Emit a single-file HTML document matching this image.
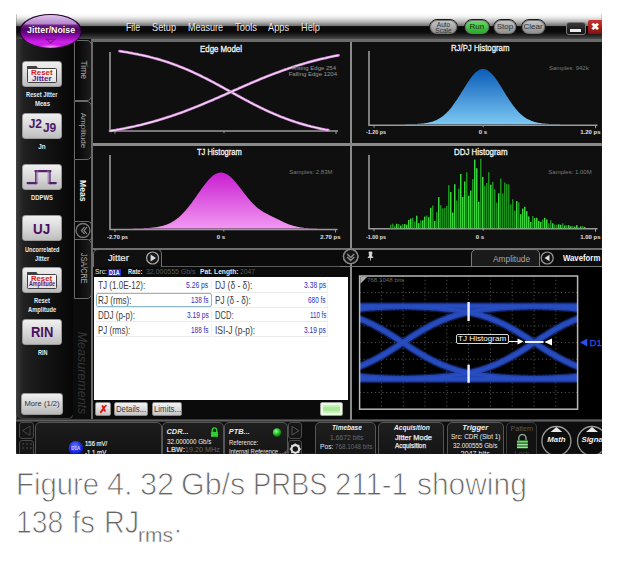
<!DOCTYPE html><html><head><meta charset="utf-8"><style>
html,body{margin:0;padding:0;width:628px;height:565px;overflow:hidden;background:#fff;}
body{position:relative;font-family:"Liberation Sans",sans-serif;}
.a{position:absolute;box-sizing:border-box;}
.t{position:absolute;white-space:nowrap;transform-origin:0 50%;}
#scr{position:absolute;left:0;top:0;width:628px;height:565px;clip-path:inset(14px 26.2px 111.2px 16.3px);}
svg{position:absolute;left:0;top:0;}
</style></head><body><div id="scr">
<div class="a" style="left:16px;top:14px;width:586px;height:440px;background:#0d0d0d;"></div>
<div class="a" style="left:16px;top:14px;width:586px;height:27px;background:linear-gradient(#fdfdfd 0px,#f0f0f0 3px,#b4b4b4 8px,#747474 11.6px,#0a0a0a 12.6px,#0a0a0a 18px,#2a2a2a 22px,#4a4a4a 25px,#5c5c5c 26px,#0e0e0e 27px);"></div>
<div class="t" style="left:126.50px;top:21.51px;font-size:11px;line-height:12.29px;color:#000;transform:scaleX(0.7898);opacity:.8;">File</div>
<div class="t" style="left:126.00px;top:21.01px;font-size:11px;line-height:12.29px;color:#e8e8e8;transform:scaleX(0.7898);">File</div>
<div class="t" style="left:152.50px;top:21.51px;font-size:11px;line-height:12.29px;color:#000;transform:scaleX(0.8349);opacity:.8;">Setup</div>
<div class="t" style="left:152.00px;top:21.01px;font-size:11px;line-height:12.29px;color:#e8e8e8;transform:scaleX(0.8349);">Setup</div>
<div class="t" style="left:188.50px;top:21.51px;font-size:11px;line-height:12.29px;color:#000;transform:scaleX(0.8178);opacity:.8;">Measure</div>
<div class="t" style="left:188.00px;top:21.01px;font-size:11px;line-height:12.29px;color:#e8e8e8;transform:scaleX(0.8178);">Measure</div>
<div class="t" style="left:235.50px;top:21.51px;font-size:11px;line-height:12.29px;color:#000;transform:scaleX(0.8567);opacity:.8;">Tools</div>
<div class="t" style="left:235.00px;top:21.01px;font-size:11px;line-height:12.29px;color:#e8e8e8;transform:scaleX(0.8567);">Tools</div>
<div class="t" style="left:268.50px;top:21.51px;font-size:11px;line-height:12.29px;color:#000;transform:scaleX(0.8376);opacity:.8;">Apps</div>
<div class="t" style="left:268.00px;top:21.01px;font-size:11px;line-height:12.29px;color:#e8e8e8;transform:scaleX(0.8376);">Apps</div>
<div class="t" style="left:301.50px;top:21.51px;font-size:11px;line-height:12.29px;color:#000;transform:scaleX(0.8398);opacity:.8;">Help</div>
<div class="t" style="left:301.00px;top:21.01px;font-size:11px;line-height:12.29px;color:#e8e8e8;transform:scaleX(0.8398);">Help</div>
<div class="a" style="left:429px;top:19px;width:29px;height:16px;border-radius:8px;border:1.5px solid #1a1a1a;background:linear-gradient(#c8c8c8,#8c8c8c);box-shadow:0 0 0 1px #777 inset;"></div>
<div class="t" style="left:436.81px;top:20.66px;font-size:6.5px;line-height:7.26px;color:#333;">Auto</div>
<div class="t" style="left:435.37px;top:26.66px;font-size:6.5px;line-height:7.26px;color:#333;">Scale</div>
<div class="a" style="left:464px;top:19px;width:25.5px;height:16px;border-radius:8px;border:1.5px solid #1a1a1a;background:linear-gradient(#6ee06e,#22a822);box-shadow:0 0 0 1px #777 inset;"></div>
<div class="t" style="left:469.41px;top:22.64px;font-size:8px;line-height:8.94px;color:#103010;">Run</div>
<div class="a" style="left:493px;top:19px;width:24px;height:16px;border-radius:8px;border:1.5px solid #1a1a1a;background:linear-gradient(#c8c8c8,#8c8c8c);box-shadow:0 0 0 1px #777 inset;"></div>
<div class="t" style="left:496.77px;top:22.64px;font-size:8px;line-height:8.94px;color:#333;">Stop</div>
<div class="a" style="left:520.5px;top:19px;width:25.0px;height:16px;border-radius:8px;border:1.5px solid #1a1a1a;background:linear-gradient(#c8c8c8,#8c8c8c);box-shadow:0 0 0 1px #777 inset;"></div>
<div class="t" style="left:523.44px;top:22.64px;font-size:8px;line-height:8.94px;color:#333;">Clear</div>
<div class="a" style="left:565.5px;top:21.5px;width:20.0px;height:13.0px;border-radius:3px;border:1.5px solid #7a7a7a;background:linear-gradient(#3a3a3a,#101010);"></div>
<div class="a" style="left:570px;top:29px;width:11px;height:2.5px;background:#eee;"></div>
<div class="a" style="left:587.5px;top:19.5px;width:14.5px;height:14.5px;background:linear-gradient(#c83030,#8a1010);border-radius:2px 0 0 2px;"></div>
<div class="t" style="left:590.55px;top:21.35px;font-size:10px;line-height:11.17px;color:#fff;font-weight:bold;">✖</div>
<div class="a" style="left:16px;top:39px;width:58px;height:380px;background:linear-gradient(90deg,#383838 0px,#222 6px,#181818 20px,#0c0c0c 45px,#050505 58px);border:1px solid #3c3c3c;border-top:none;border-radius:0 0 6px 6px;"></div>
<div class="a" style="left:22px;top:61.2px;width:40px;height:25.5px;border-radius:3px;background:linear-gradient(#f0f0f0,#d4d4d4 60%,#bdbdbd);border:1px solid #9a9a9a;"></div>
<div class="a" style="left:27px;top:68.2px;width:29.799999999999997px;height:14.799999999999997px;background:linear-gradient(#fafafa,#e2e2e2);border:1.8px solid #404040;border-radius:1.5px;"></div>
<svg width="628" height="565"><path d="M27,69 L27,66.6 Q27,66 27.8,66 L36.5,66 L38,68.4 Z" fill="#404040"/></svg>
<div class="t" style="left:30.50px;top:69.33px;font-size:6.6px;line-height:7.37px;color:#d41c1c;font-weight:bold;transform:scaleX(1.2071);">Reset</div>
<div class="t" style="left:31.60px;top:74.53px;font-size:6.6px;line-height:7.37px;color:#5a2080;font-weight:bold;transform:scaleX(1.2144);">Jitter</div>
<div class="t" style="left:26.40px;top:90.90px;font-size:6.6px;line-height:7.37px;color:#ececec;font-weight:bold;transform:scaleX(0.8734);">Reset Jitter</div>
<div class="t" style="left:34.50px;top:100.40px;font-size:6.6px;line-height:7.37px;color:#ececec;font-weight:bold;transform:scaleX(0.9085);">Meas</div>
<div class="a" style="left:22px;top:113px;width:40px;height:26px;border-radius:3px;background:linear-gradient(#f0f0f0,#d4d4d4 60%,#bdbdbd);border:1px solid #9a9a9a;"></div>
<div class="t" style="left:28.63px;top:118.46px;font-size:12px;line-height:13.40px;color:#4a1a6a;font-weight:bold;">J2</div>
<div class="t" style="left:42.93px;top:121.96px;font-size:12px;line-height:13.40px;color:#4a1a6a;font-weight:bold;">J9</div>
<div class="t" style="left:38.27px;top:142.51px;font-size:6.4px;line-height:7.15px;color:#ececec;font-weight:bold;">Jn</div>
<div class="a" style="left:22px;top:164px;width:40px;height:25.5px;border-radius:3px;background:linear-gradient(#f0f0f0,#d4d4d4 60%,#bdbdbd);border:1px solid #9a9a9a;"></div>
<svg width="628" height="565"><defs><linearGradient id="sqr" x1="0" x2="1"><stop offset="0" stop-color="#4a1a60"/><stop offset="1" stop-color="#b890c8" stop-opacity=".3"/></linearGradient><linearGradient id="sqf" x1="1" x2="0"><stop offset="0" stop-color="#4a1a60"/><stop offset="1" stop-color="#b890c8" stop-opacity=".3"/></linearGradient></defs><path d="M27.6,183.1 L36.5,183.1 M35.5,171.2 L50.4,171.2 M49.4,183.1 L55.8,183.1" fill="none" stroke="#55206c" stroke-width="2.2" stroke-linecap="round"/><rect x="35" y="170.2" width="3.6" height="14" fill="url(#sqr)"/><rect x="47" y="170.2" width="3.6" height="14" fill="url(#sqf)"/></svg>
<div class="t" style="left:31.10px;top:193.90px;font-size:6.6px;line-height:7.37px;color:#ececec;font-weight:bold;transform:scaleX(0.8914);">DDPWS</div>
<div class="a" style="left:22px;top:215px;width:40px;height:26px;border-radius:3px;background:linear-gradient(#f0f0f0,#d4d4d4 60%,#bdbdbd);border:1px solid #9a9a9a;"></div>
<div class="t" style="left:33.20px;top:220.83px;font-size:15px;line-height:16.75px;color:#4a1060;font-weight:bold;transform:scaleX(0.8970);">UJ</div>
<div class="t" style="left:25.40px;top:246.11px;font-size:6.4px;line-height:7.15px;color:#ececec;font-weight:bold;transform:scaleX(0.8739);">Uncorrelated</div>
<div class="t" style="left:35.00px;top:255.00px;font-size:6.6px;line-height:7.37px;color:#ececec;font-weight:bold;transform:scaleX(0.8860);">Jitter</div>
<div class="a" style="left:22px;top:267.2px;width:40px;height:25.5px;border-radius:3px;background:linear-gradient(#f0f0f0,#d4d4d4 60%,#bdbdbd);border:1px solid #9a9a9a;"></div>
<div class="a" style="left:27px;top:274.2px;width:29.799999999999997px;height:15.0px;background:linear-gradient(#fafafa,#e2e2e2);border:1.8px solid #404040;border-radius:1.5px;"></div>
<svg width="628" height="565"><path d="M27,275 L27,272.6 Q27,272 27.8,272 L36.5,272 L38,274.4 Z" fill="#404040"/></svg>
<div class="t" style="left:30.90px;top:274.93px;font-size:6.6px;line-height:7.37px;color:#d41c1c;font-weight:bold;transform:scaleX(1.1682);">Reset</div>
<div class="t" style="left:29.10px;top:280.23px;font-size:6.6px;line-height:7.37px;color:#4a1a80;font-weight:bold;transform:scaleX(0.8027);">Amplitude</div>
<div class="t" style="left:33.60px;top:297.40px;font-size:6.6px;line-height:7.37px;color:#ececec;font-weight:bold;transform:scaleX(0.8845);">Reset</div>
<div class="t" style="left:28.30px;top:306.40px;font-size:6.6px;line-height:7.37px;color:#ececec;font-weight:bold;transform:scaleX(0.8771);">Amplitude</div>
<div class="a" style="left:22px;top:319px;width:40px;height:26px;border-radius:3px;background:linear-gradient(#f0f0f0,#d4d4d4 60%,#bdbdbd);border:1px solid #9a9a9a;"></div>
<div class="t" style="left:30.70px;top:323.53px;font-size:15px;line-height:16.75px;color:#4a1060;font-weight:bold;transform:scaleX(0.8632);">RIN</div>
<div class="t" style="left:37.50px;top:348.60px;font-size:6.6px;line-height:7.37px;color:#ececec;font-weight:bold;transform:scaleX(0.8358);">RIN</div>
<div class="a" style="left:21px;top:392.5px;width:42px;height:22.5px;border-radius:3px;background:linear-gradient(#f0f0f0,#d0d0d0 60%,#b8b8b8);border:1px solid #9a9a9a;"></div>
<div class="t" style="left:24.47px;top:399.86px;font-size:7.6px;line-height:8.49px;color:#333;">More (1/2)</div>
<div class="a" style="left:73px;top:39px;width:19.5px;height:381px;background:#0c0c0c;"></div>
<div class="a" style="left:74px;top:39.5px;width:18px;height:61.0px;border:1.3px solid #6a6a6a;border-radius:0 5px 5px 0;background:linear-gradient(90deg,#050505,#1c1c1c);"></div>
<div class="t" style="left:73.71px;top:65.24px;font-size:8.5px;line-height:9.49px;color:#a8a8a8;transform:rotate(90deg) scaleX(1.0000);transform-origin:50% 50%;">Time</div>
<div class="a" style="left:74px;top:100.5px;width:18px;height:59.5px;border:1.3px solid #6a6a6a;border-radius:0 5px 5px 0;background:linear-gradient(90deg,#050505,#1c1c1c);"></div>
<div class="t" style="left:65.21px;top:125.77px;font-size:8px;line-height:8.94px;color:#a8a8a8;transform:rotate(90deg) scaleX(1.0000);transform-origin:50% 50%;">Amplitude</div>
<div class="a" style="left:74px;top:160px;width:18px;height:61px;border-left:1.3px solid #6a6a6a;background:#0a0a0a;"></div>
<div class="t" style="left:72.37px;top:185.74px;font-size:8.5px;line-height:9.49px;color:#f4f4f4;font-weight:bold;transform:rotate(90deg) scaleX(1.0000);transform-origin:50% 50%;">Meas</div>
<div class="a" style="left:74px;top:221px;width:18px;height:19.5px;border:1.3px solid #6a6a6a;border-radius:0 4px 4px 0;background:#0a0a0a;"></div>
<svg width="628" height="565"><circle cx="83" cy="230.5" r="7" fill="#111" stroke="#777" stroke-width="1.3"/><path d="M84.5,227 L81.5,230.5 L84.5,234 M87,227 L84,230.5 L87,234" fill="none" stroke="#999" stroke-width="1.1"/></svg>
<div class="a" style="left:74px;top:239px;width:18px;height:60px;border:1.3px solid #6a6a6a;border-radius:0 5px 5px 0;background:linear-gradient(90deg,#050505,#1c1c1c);"></div>
<div class="t" style="left:63.03px;top:263.22px;font-size:9.6px;line-height:10.72px;color:#a8a8a8;transform:rotate(90deg) scaleX(0.7523);transform-origin:50% 50%;">JSA/CRE</div>
<div class="a" style="left:91px;top:39px;width:1.5px;height:381px;background:#6a6a6a;"></div>
<div class="t" style="left:40.46px;top:365.50px;font-size:12.5px;line-height:13.96px;color:#363636;font-style:italic;transform:rotate(90deg);transform-origin:50% 50%;">Measurements</div>
<div class="a" style="left:92.5px;top:41px;width:509.5px;height:208px;background:#0f0f0f;"></div>
<div class="a" style="left:349.8px;top:41px;width:2.1999999999999886px;height:379px;background:#8a8a8a;"></div>
<div class="a" style="left:92.5px;top:143.4px;width:509.5px;height:2.4000000000000057px;background:#8a8a8a;"></div>
<div class="a" style="left:92.5px;top:247.5px;width:509.5px;height:2.0px;background:#6a6a6a;"></div>
<div class="a" style="left:92.5px;top:39px;width:509.5px;height:2.5px;background:#6a6a6a;"></div>
<svg width="628" height="565"><defs><linearGradient id="mg" x1="0" y1="0" x2="0" y2="1"><stop offset="0" stop-color="#c81ed0"/><stop offset="1" stop-color="#f298f2"/></linearGradient><linearGradient id="bg2" x1="0" y1="0" x2="0" y2="1"><stop offset="0" stop-color="#0a5cb8"/><stop offset="1" stop-color="#7cc8f4"/></linearGradient><linearGradient id="gg" x1="0" y1="0" x2="0" y2="1"><stop offset="0" stop-color="#40e040"/><stop offset="1" stop-color="#1a8a1a"/></linearGradient></defs><path d="M110,52 L110,131 L338,131" fill="none" stroke="#9a9a9a" stroke-width="1.6"/><path d="M115,131 l0,2.5 M224.0,131 l0,2 M336,131 l0,3" stroke="#9a9a9a" stroke-width="1"/><path d="M119.5,51.2 L121.2,51.4 L123.0,51.7 L124.7,52.0 L126.5,52.2 L128.2,52.5 L129.9,52.8 L131.7,53.1 L133.4,53.5 L135.2,53.8 L136.9,54.1 L138.7,54.5 L140.4,54.8 L142.1,55.2 L143.9,55.6 L145.6,56.0 L147.4,56.4 L149.1,56.8 L150.8,57.3 L152.6,57.7 L154.3,58.2 L156.1,58.6 L157.8,59.1 L159.6,59.6 L161.3,60.2 L163.0,60.7 L164.8,61.2 L166.5,61.8 L168.3,62.4 L170.0,63.0 L171.8,63.6 L173.5,64.2 L175.2,64.9 L177.0,65.5 L178.7,66.2 L180.5,66.9 L182.2,67.6 L183.9,68.3 L185.7,69.0 L187.4,69.7 L189.2,70.5 L190.9,71.3 L192.7,72.1 L194.4,72.9 L196.1,73.7 L197.9,74.5 L199.6,75.3 L201.4,76.2 L203.1,77.1 L204.8,77.9 L206.6,78.8 L208.3,79.7 L210.1,80.6 L211.8,81.5 L213.6,82.4 L215.3,83.4 L217.0,84.3 L218.8,85.2 L220.5,86.2 L222.3,87.1 L224.0,88.1 L225.7,89.1 L227.5,90.0 L229.2,91.0 L231.0,91.9 L232.7,92.9 L234.4,93.9 L236.2,94.8 L237.9,95.8 L239.7,96.7 L241.4,97.7 L243.2,98.6 L244.9,99.6 L246.6,100.5 L248.4,101.4 L250.1,102.4 L251.9,103.3 L253.6,104.2 L255.3,105.1 L257.1,105.9 L258.8,106.8 L260.6,107.7 L262.3,108.5 L264.1,109.4 L265.8,110.2 L267.5,111.0 L269.3,111.8 L271.0,112.6 L272.8,113.3 L274.5,114.1 L276.2,114.8 L278.0,115.5 L279.7,116.3 L281.5,117.0 L283.2,117.6 L285.0,118.3 L286.7,118.9 L288.4,119.6 L290.2,120.2 L291.9,120.8 L293.7,121.4 L295.4,122.0 L297.1,122.5 L298.9,123.1 L300.6,123.6 L302.4,124.1 L304.1,124.6 L305.9,125.1 L307.6,125.6 L309.3,126.0 L311.1,126.5 L312.8,126.9 L314.6,127.3 L316.3,127.7 L318.1,128.1 L319.8,128.5 L321.5,128.9 L323.3,129.2 L325.0,129.6 L326.8,129.9 L328.5,130.2" fill="none" stroke="#cc80d4" stroke-width="2.7" stroke-linecap="round"/><path d="M119.5,51.2 L121.2,51.4 L123.0,51.7 L124.7,52.0 L126.5,52.2 L128.2,52.5 L129.9,52.8 L131.7,53.1 L133.4,53.5 L135.2,53.8 L136.9,54.1 L138.7,54.5 L140.4,54.8 L142.1,55.2 L143.9,55.6 L145.6,56.0 L147.4,56.4 L149.1,56.8 L150.8,57.3 L152.6,57.7 L154.3,58.2 L156.1,58.6 L157.8,59.1 L159.6,59.6 L161.3,60.2 L163.0,60.7 L164.8,61.2 L166.5,61.8 L168.3,62.4 L170.0,63.0 L171.8,63.6 L173.5,64.2 L175.2,64.9 L177.0,65.5 L178.7,66.2 L180.5,66.9 L182.2,67.6 L183.9,68.3 L185.7,69.0 L187.4,69.7 L189.2,70.5 L190.9,71.3 L192.7,72.1 L194.4,72.9 L196.1,73.7 L197.9,74.5 L199.6,75.3 L201.4,76.2 L203.1,77.1 L204.8,77.9 L206.6,78.8 L208.3,79.7 L210.1,80.6 L211.8,81.5 L213.6,82.4 L215.3,83.4 L217.0,84.3 L218.8,85.2 L220.5,86.2 L222.3,87.1 L224.0,88.1 L225.7,89.1 L227.5,90.0 L229.2,91.0 L231.0,91.9 L232.7,92.9 L234.4,93.9 L236.2,94.8 L237.9,95.8 L239.7,96.7 L241.4,97.7 L243.2,98.6 L244.9,99.6 L246.6,100.5 L248.4,101.4 L250.1,102.4 L251.9,103.3 L253.6,104.2 L255.3,105.1 L257.1,105.9 L258.8,106.8 L260.6,107.7 L262.3,108.5 L264.1,109.4 L265.8,110.2 L267.5,111.0 L269.3,111.8 L271.0,112.6 L272.8,113.3 L274.5,114.1 L276.2,114.8 L278.0,115.5 L279.7,116.3 L281.5,117.0 L283.2,117.6 L285.0,118.3 L286.7,118.9 L288.4,119.6 L290.2,120.2 L291.9,120.8 L293.7,121.4 L295.4,122.0 L297.1,122.5 L298.9,123.1 L300.6,123.6 L302.4,124.1 L304.1,124.6 L305.9,125.1 L307.6,125.6 L309.3,126.0 L311.1,126.5 L312.8,126.9 L314.6,127.3 L316.3,127.7 L318.1,128.1 L319.8,128.5 L321.5,128.9 L323.3,129.2 L325.0,129.6 L326.8,129.9 L328.5,130.2" fill="none" stroke="#f4dcf4" stroke-width="1.3" opacity=".95"/><path d="M110.0,131.0 L111.9,130.7 L113.8,130.4 L115.7,130.1 L117.6,129.7 L119.5,129.4 L121.4,129.0 L123.3,128.7 L125.2,128.3 L127.1,127.9 L129.0,127.5 L130.9,127.1 L132.8,126.7 L134.8,126.3 L136.7,125.8 L138.6,125.4 L140.5,125.0 L142.4,124.5 L144.3,124.0 L146.2,123.5 L148.1,123.0 L150.0,122.5 L151.9,122.0 L153.8,121.5 L155.7,120.9 L157.6,120.4 L159.5,119.8 L161.4,119.2 L163.3,118.6 L165.2,118.0 L167.1,117.4 L169.0,116.8 L170.9,116.2 L172.8,115.5 L174.7,114.9 L176.6,114.2 L178.6,113.5 L180.5,112.9 L182.4,112.2 L184.3,111.5 L186.2,110.7 L188.1,110.0 L190.0,109.3 L191.9,108.5 L193.8,107.8 L195.7,107.0 L197.6,106.3 L199.5,105.5 L201.4,104.7 L203.3,103.9 L205.2,103.1 L207.1,102.3 L209.0,101.5 L210.9,100.7 L212.8,99.9 L214.7,99.0 L216.6,98.2 L218.5,97.4 L220.4,96.5 L222.3,95.7 L224.2,94.9 L226.2,94.0 L228.1,93.2 L230.0,92.3 L231.9,91.5 L233.8,90.6 L235.7,89.8 L237.6,89.0 L239.5,88.1 L241.4,87.3 L243.3,86.4 L245.2,85.6 L247.1,84.8 L249.0,84.0 L250.9,83.1 L252.8,82.3 L254.7,81.5 L256.6,80.7 L258.5,79.9 L260.4,79.1 L262.3,78.3 L264.2,77.6 L266.1,76.8 L268.0,76.0 L269.9,75.3 L271.9,74.5 L273.8,73.8 L275.7,73.1 L277.6,72.4 L279.5,71.7 L281.4,71.0 L283.3,70.3 L285.2,69.6 L287.1,69.0 L289.0,68.3 L290.9,67.7 L292.8,67.0 L294.7,66.4 L296.6,65.8 L298.5,65.2 L300.4,64.6 L302.3,64.1 L304.2,63.5 L306.1,63.0 L308.0,62.4 L309.9,61.9 L311.8,61.4 L313.7,60.9 L315.6,60.4 L317.6,59.9 L319.5,59.4 L321.4,58.9 L323.3,58.5 L325.2,58.1 L327.1,57.6 L329.0,57.2 L330.9,56.8 L332.8,56.4 L334.7,56.0 L336.6,55.6 L338.5,55.3" fill="none" stroke="#cc80d4" stroke-width="2.7" stroke-linecap="round"/><path d="M110.0,131.0 L111.9,130.7 L113.8,130.4 L115.7,130.1 L117.6,129.7 L119.5,129.4 L121.4,129.0 L123.3,128.7 L125.2,128.3 L127.1,127.9 L129.0,127.5 L130.9,127.1 L132.8,126.7 L134.8,126.3 L136.7,125.8 L138.6,125.4 L140.5,125.0 L142.4,124.5 L144.3,124.0 L146.2,123.5 L148.1,123.0 L150.0,122.5 L151.9,122.0 L153.8,121.5 L155.7,120.9 L157.6,120.4 L159.5,119.8 L161.4,119.2 L163.3,118.6 L165.2,118.0 L167.1,117.4 L169.0,116.8 L170.9,116.2 L172.8,115.5 L174.7,114.9 L176.6,114.2 L178.6,113.5 L180.5,112.9 L182.4,112.2 L184.3,111.5 L186.2,110.7 L188.1,110.0 L190.0,109.3 L191.9,108.5 L193.8,107.8 L195.7,107.0 L197.6,106.3 L199.5,105.5 L201.4,104.7 L203.3,103.9 L205.2,103.1 L207.1,102.3 L209.0,101.5 L210.9,100.7 L212.8,99.9 L214.7,99.0 L216.6,98.2 L218.5,97.4 L220.4,96.5 L222.3,95.7 L224.2,94.9 L226.2,94.0 L228.1,93.2 L230.0,92.3 L231.9,91.5 L233.8,90.6 L235.7,89.8 L237.6,89.0 L239.5,88.1 L241.4,87.3 L243.3,86.4 L245.2,85.6 L247.1,84.8 L249.0,84.0 L250.9,83.1 L252.8,82.3 L254.7,81.5 L256.6,80.7 L258.5,79.9 L260.4,79.1 L262.3,78.3 L264.2,77.6 L266.1,76.8 L268.0,76.0 L269.9,75.3 L271.9,74.5 L273.8,73.8 L275.7,73.1 L277.6,72.4 L279.5,71.7 L281.4,71.0 L283.3,70.3 L285.2,69.6 L287.1,69.0 L289.0,68.3 L290.9,67.7 L292.8,67.0 L294.7,66.4 L296.6,65.8 L298.5,65.2 L300.4,64.6 L302.3,64.1 L304.2,63.5 L306.1,63.0 L308.0,62.4 L309.9,61.9 L311.8,61.4 L313.7,60.9 L315.6,60.4 L317.6,59.9 L319.5,59.4 L321.4,58.9 L323.3,58.5 L325.2,58.1 L327.1,57.6 L329.0,57.2 L330.9,56.8 L332.8,56.4 L334.7,56.0 L336.6,55.6 L338.5,55.3" fill="none" stroke="#f4dcf4" stroke-width="1.3" opacity=".95"/><path d="M369,51 L369,125.2 L597.5,125.2" fill="none" stroke="#9a9a9a" stroke-width="1.6"/><path d="M374,125.2 l0,2.5 M483.2,125.2 l0,2 M595.5,125.2 l0,3" stroke="#9a9a9a" stroke-width="1"/><path d="M400,124.2 L400.0,124.2 L401.1,124.2 L402.1,124.2 L403.2,124.2 L404.2,124.2 L405.3,124.2 L406.4,124.1 L407.4,124.1 L408.5,124.1 L409.6,124.1 L410.6,124.1 L411.7,124.1 L412.8,124.0 L413.8,124.0 L414.9,124.0 L415.9,123.9 L417.0,123.9 L418.1,123.8 L419.1,123.8 L420.2,123.7 L421.2,123.6 L422.3,123.5 L423.4,123.4 L424.4,123.3 L425.5,123.1 L426.6,123.0 L427.6,122.8 L428.7,122.5 L429.8,122.3 L430.8,122.0 L431.9,121.7 L432.9,121.4 L434.0,121.0 L435.1,120.6 L436.1,120.2 L437.2,119.7 L438.2,119.1 L439.3,118.5 L440.4,117.8 L441.4,117.1 L442.5,116.4 L443.6,115.5 L444.6,114.6 L445.7,113.7 L446.8,112.6 L447.8,111.5 L448.9,110.4 L449.9,109.2 L451.0,107.9 L452.1,106.5 L453.1,105.1 L454.2,103.6 L455.2,102.1 L456.3,100.5 L457.4,98.9 L458.4,97.3 L459.5,95.6 L460.6,93.9 L461.6,92.1 L462.7,90.4 L463.8,88.7 L464.8,87.0 L465.9,85.3 L466.9,83.6 L468.0,82.0 L469.1,80.4 L470.1,78.9 L471.2,77.4 L472.2,76.1 L473.3,74.8 L474.4,73.7 L475.4,72.6 L476.5,71.7 L477.6,70.9 L478.6,70.2 L479.7,69.7 L480.8,69.3 L481.8,69.1 L482.9,69.0 L483.9,69.1 L485.0,69.3 L486.1,69.6 L487.1,70.1 L488.2,70.7 L489.2,71.5 L490.3,72.4 L491.4,73.4 L492.4,74.6 L493.5,75.8 L494.6,77.1 L495.6,78.5 L496.7,80.0 L497.8,81.6 L498.8,83.2 L499.9,84.9 L500.9,86.6 L502.0,88.3 L503.1,90.0 L504.1,91.7 L505.2,93.5 L506.2,95.2 L507.3,96.9 L508.4,98.5 L509.4,100.2 L510.5,101.8 L511.6,103.3 L512.6,104.8 L513.7,106.2 L514.8,107.6 L515.8,108.9 L516.9,110.1 L517.9,111.3 L519.0,112.4 L520.1,113.4 L521.1,114.4 L522.2,115.3 L523.2,116.2 L524.3,117.0 L525.4,117.7 L526.4,118.4 L527.5,119.0 L528.6,119.5 L529.6,120.0 L530.7,120.5 L531.8,120.9 L532.8,121.3 L533.9,121.7 L534.9,122.0 L536.0,122.2 L537.1,122.5 L538.1,122.7 L539.2,122.9 L540.2,123.1 L541.3,123.2 L542.4,123.4 L543.4,123.5 L544.5,123.6 L545.6,123.7 L546.6,123.8 L547.7,123.8 L548.8,123.9 L549.8,123.9 L550.9,124.0 L551.9,124.0 L553.0,124.0 L554.1,124.1 L555.1,124.1 L556.2,124.1 L557.2,124.1 L558.3,124.1 L559.4,124.1 L560.4,124.2 L561.5,124.2 L562.6,124.2 L563.6,124.2 L564.7,124.2 L565.8,124.2 L566.8,124.2 L567.9,124.2 L568.9,124.2 L570.0,124.2 L570,124.2 Z" fill="url(#bg2)"/><path d="M110,155 L110,229.5 L337.5,229.5" fill="none" stroke="#9a9a9a" stroke-width="1.6"/><path d="M115,229.5 l0,2.5 M223.8,229.5 l0,2 M335.5,229.5 l0,3" stroke="#9a9a9a" stroke-width="1"/><path d="M130,228.4 L130.0,228.4 L131.2,228.4 L132.4,228.4 L133.6,228.3 L134.8,228.3 L135.9,228.3 L137.1,228.3 L138.3,228.3 L139.5,228.3 L140.7,228.2 L141.9,228.2 L143.1,228.2 L144.2,228.1 L145.4,228.1 L146.6,228.0 L147.8,228.0 L149.0,227.9 L150.2,227.8 L151.4,227.7 L152.6,227.6 L153.8,227.5 L154.9,227.3 L156.1,227.2 L157.3,227.0 L158.5,226.8 L159.7,226.5 L160.9,226.3 L162.1,226.0 L163.2,225.7 L164.4,225.3 L165.6,224.9 L166.8,224.5 L168.0,224.0 L169.2,223.5 L170.4,222.9 L171.6,222.3 L172.8,221.6 L173.9,220.9 L175.1,220.1 L176.3,219.3 L177.5,218.3 L178.7,217.4 L179.9,216.3 L181.1,215.2 L182.2,214.1 L183.4,212.8 L184.6,211.6 L185.8,210.2 L187.0,208.8 L188.2,207.3 L189.4,205.8 L190.6,204.3 L191.8,202.7 L192.9,201.0 L194.1,199.4 L195.3,197.7 L196.5,196.0 L197.7,194.3 L198.9,192.6 L200.1,190.9 L201.2,189.2 L202.4,187.6 L203.6,185.9 L204.8,184.4 L206.0,182.9 L207.2,181.5 L208.4,180.1 L209.6,178.8 L210.8,177.7 L211.9,176.6 L213.1,175.6 L214.3,174.8 L215.5,174.1 L216.7,173.5 L217.9,173.1 L219.1,172.8 L220.2,172.6 L221.4,172.6 L222.6,172.7 L223.8,173.0 L225.0,173.4 L226.2,173.9 L227.4,174.6 L228.6,175.4 L229.8,176.3 L230.9,177.3 L232.1,178.4 L233.3,179.6 L234.5,180.9 L235.7,182.3 L236.9,183.7 L238.1,185.2 L239.2,186.7 L240.4,188.2 L241.6,189.8 L242.8,191.4 L244.0,192.9 L245.2,194.5 L246.4,196.0 L247.6,197.5 L248.8,198.9 L249.9,200.3 L251.1,201.7 L252.3,202.9 L253.5,204.2 L254.7,205.3 L255.9,206.4 L257.1,207.4 L258.2,208.4 L259.4,209.3 L260.6,210.1 L261.8,210.9 L263.0,211.7 L264.2,212.4 L265.4,213.0 L266.6,213.7 L267.8,214.3 L268.9,214.9 L270.1,215.5 L271.3,216.1 L272.5,216.7 L273.7,217.2 L274.9,217.8 L276.1,218.4 L277.2,219.0 L278.4,219.6 L279.6,220.1 L280.8,220.7 L282.0,221.3 L283.2,221.9 L284.4,222.4 L285.6,222.9 L286.8,223.4 L287.9,223.9 L289.1,224.4 L290.3,224.8 L291.5,225.2 L292.7,225.6 L293.9,226.0 L295.1,226.3 L296.2,226.6 L297.4,226.8 L298.6,227.1 L299.8,227.3 L301.0,227.4 L302.2,227.6 L303.4,227.7 L304.6,227.9 L305.8,228.0 L306.9,228.0 L308.1,228.1 L309.3,228.2 L310.5,228.2 L311.7,228.2 L312.9,228.3 L314.1,228.3 L315.2,228.3 L316.4,228.3 L317.6,228.4 L318.8,228.4 L320.0,228.4 L320,228.4 Z" fill="url(#mg)"/><path d="M369,155 L369,228.8 L597.5,228.8" fill="none" stroke="#9a9a9a" stroke-width="1.6"/><path d="M374,228.8 l0,2.5 M483.2,228.8 l0,2 M595.5,228.8 l0,3" stroke="#9a9a9a" stroke-width="1"/><rect x="390" y="224.7" width="1.5" height="3.6" fill="#1e8e1e"/><rect x="392" y="223.6" width="1.5" height="4.7" fill="#1e8e1e"/><rect x="394" y="225.8" width="1.5" height="2.5" fill="#1e8e1e"/><rect x="396" y="223.8" width="1.5" height="4.5" fill="#3cd43c"/><rect x="398" y="224.0" width="1.5" height="4.3" fill="#1e8e1e"/><rect x="400" y="225.5" width="1.5" height="2.8" fill="#3cd43c"/><rect x="402" y="223.9" width="1.5" height="4.4" fill="#1e8e1e"/><rect x="404" y="224.1" width="1.5" height="4.2" fill="#3cd43c"/><rect x="406" y="224.7" width="1.5" height="3.6" fill="#3cd43c"/><rect x="408" y="219.9" width="1.5" height="8.4" fill="#3cd43c"/><rect x="410" y="218.6" width="1.5" height="9.7" fill="#3cd43c"/><rect x="412" y="217.8" width="1.5" height="10.5" fill="#1e8e1e"/><rect x="414" y="221.5" width="1.5" height="6.8" fill="#1e8e1e"/><rect x="416" y="215.7" width="1.5" height="12.6" fill="#3cd43c"/><rect x="418" y="223.2" width="1.5" height="5.1" fill="#3cd43c"/><rect x="420" y="220.5" width="1.5" height="7.8" fill="#1e8e1e"/><rect x="422" y="220.3" width="1.5" height="8.0" fill="#3cd43c"/><rect x="424" y="216.6" width="1.5" height="11.7" fill="#3cd43c"/><rect x="426" y="215.5" width="1.5" height="12.8" fill="#1e8e1e"/><rect x="428" y="217.3" width="1.5" height="11.0" fill="#3cd43c"/><rect x="430" y="207.8" width="1.5" height="20.5" fill="#3cd43c"/><rect x="432" y="205.5" width="1.5" height="22.8" fill="#1e8e1e"/><rect x="434" y="220.9" width="1.5" height="7.4" fill="#3cd43c"/><rect x="436" y="212.2" width="1.5" height="16.1" fill="#1e8e1e"/><rect x="438" y="197.1" width="1.5" height="31.2" fill="#3cd43c"/><rect x="440" y="205.2" width="1.5" height="23.1" fill="#1e8e1e"/><rect x="442" y="208.4" width="1.5" height="19.9" fill="#1e8e1e"/><rect x="444" y="208.0" width="1.5" height="20.3" fill="#1e8e1e"/><rect x="446" y="206.0" width="1.5" height="22.3" fill="#1e8e1e"/><rect x="448" y="185.2" width="1.5" height="43.1" fill="#1e8e1e"/><rect x="450" y="192.0" width="1.5" height="36.3" fill="#3cd43c"/><rect x="452" y="212.5" width="1.5" height="15.8" fill="#3cd43c"/><rect x="454" y="184.2" width="1.5" height="44.1" fill="#3cd43c"/><rect x="456" y="200.5" width="1.5" height="27.8" fill="#1e8e1e"/><rect x="458" y="188.7" width="1.5" height="39.6" fill="#1e8e1e"/><rect x="460" y="174.0" width="1.5" height="54.3" fill="#3cd43c"/><rect x="462" y="197.0" width="1.5" height="31.3" fill="#3cd43c"/><rect x="464" y="181.5" width="1.5" height="46.8" fill="#3cd43c"/><rect x="466" y="172.2" width="1.5" height="56.1" fill="#1e8e1e"/><rect x="468" y="195.7" width="1.5" height="32.6" fill="#3cd43c"/><rect x="470" y="190.5" width="1.5" height="37.8" fill="#3cd43c"/><rect x="472" y="179.1" width="1.5" height="49.2" fill="#1e8e1e"/><rect x="474" y="159.6" width="1.5" height="68.7" fill="#3cd43c"/><rect x="476" y="168.2" width="1.5" height="60.1" fill="#3cd43c"/><rect x="478" y="201.7" width="1.5" height="26.6" fill="#3cd43c"/><rect x="480" y="158.7" width="1.5" height="69.6" fill="#1e8e1e"/><rect x="482" y="176.9" width="1.5" height="51.4" fill="#3cd43c"/><rect x="484" y="185.6" width="1.5" height="42.7" fill="#1e8e1e"/><rect x="486" y="183.0" width="1.5" height="45.3" fill="#1e8e1e"/><rect x="488" y="172.2" width="1.5" height="56.1" fill="#1e8e1e"/><rect x="490" y="184.7" width="1.5" height="43.6" fill="#3cd43c"/><rect x="492" y="181.8" width="1.5" height="46.5" fill="#1e8e1e"/><rect x="494" y="189.3" width="1.5" height="39.0" fill="#1e8e1e"/><rect x="496" y="202.7" width="1.5" height="25.6" fill="#1e8e1e"/><rect x="498" y="193.3" width="1.5" height="35.0" fill="#3cd43c"/><rect x="500" y="178.5" width="1.5" height="49.8" fill="#1e8e1e"/><rect x="502" y="193.5" width="1.5" height="34.8" fill="#1e8e1e"/><rect x="504" y="182.6" width="1.5" height="45.7" fill="#1e8e1e"/><rect x="506" y="183.9" width="1.5" height="44.4" fill="#1e8e1e"/><rect x="508" y="184.3" width="1.5" height="44.0" fill="#1e8e1e"/><rect x="510" y="204.3" width="1.5" height="24.0" fill="#1e8e1e"/><rect x="512" y="199.3" width="1.5" height="29.0" fill="#1e8e1e"/><rect x="514" y="210.7" width="1.5" height="17.6" fill="#1e8e1e"/><rect x="516" y="201.1" width="1.5" height="27.2" fill="#3cd43c"/><rect x="518" y="202.3" width="1.5" height="26.0" fill="#1e8e1e"/><rect x="520" y="214.2" width="1.5" height="14.1" fill="#3cd43c"/><rect x="522" y="208.6" width="1.5" height="19.7" fill="#3cd43c"/><rect x="524" y="206.8" width="1.5" height="21.5" fill="#3cd43c"/><rect x="526" y="211.2" width="1.5" height="17.1" fill="#3cd43c"/><rect x="528" y="216.4" width="1.5" height="11.9" fill="#3cd43c"/><rect x="530" y="222.0" width="1.5" height="6.3" fill="#3cd43c"/><rect x="532" y="215.9" width="1.5" height="12.4" fill="#1e8e1e"/><rect x="534" y="218.2" width="1.5" height="10.1" fill="#3cd43c"/><rect x="536" y="217.8" width="1.5" height="10.5" fill="#3cd43c"/><rect x="538" y="220.8" width="1.5" height="7.5" fill="#3cd43c"/><rect x="540" y="221.9" width="1.5" height="6.4" fill="#3cd43c"/><rect x="542" y="219.4" width="1.5" height="8.9" fill="#1e8e1e"/><rect x="544" y="217.8" width="1.5" height="10.5" fill="#3cd43c"/><rect x="546" y="219.5" width="1.5" height="8.8" fill="#3cd43c"/><rect x="548" y="223.3" width="1.5" height="5.0" fill="#1e8e1e"/><rect x="550" y="220.3" width="1.5" height="8.0" fill="#1e8e1e"/><rect x="552" y="223.3" width="1.5" height="5.0" fill="#3cd43c"/><rect x="554" y="224.6" width="1.5" height="3.7" fill="#1e8e1e"/><rect x="556" y="224.7" width="1.5" height="3.6" fill="#1e8e1e"/><rect x="558" y="224.3" width="1.5" height="4.0" fill="#3cd43c"/><rect x="560" y="224.8" width="1.5" height="3.5" fill="#3cd43c"/><rect x="562" y="223.3" width="1.5" height="5.0" fill="#1e8e1e"/><rect x="564" y="225.4" width="1.5" height="2.9" fill="#3cd43c"/><rect x="566" y="225.2" width="1.5" height="3.1" fill="#1e8e1e"/><rect x="568" y="225.2" width="1.5" height="3.1" fill="#3cd43c"/><rect x="570" y="226.2" width="1.5" height="2.1" fill="#3cd43c"/><rect x="572" y="225.9" width="1.5" height="2.4" fill="#1e8e1e"/><rect x="574" y="226.6" width="1.5" height="1.7" fill="#3cd43c"/><rect x="576" y="225.1" width="1.5" height="3.2" fill="#3cd43c"/><rect x="578" y="227.2" width="1.5" height="1.1" fill="#1e8e1e"/><rect x="580" y="226.4" width="1.5" height="1.9" fill="#3cd43c"/><rect x="582" y="226.0" width="1.5" height="2.3" fill="#1e8e1e"/><rect x="584" y="226.9" width="1.5" height="1.4" fill="#3cd43c"/></svg>
<div class="t" style="left:200.30px;top:43.80px;font-size:9px;line-height:10.05px;color:#f4f4f4;transform:scaleX(0.8744);-webkit-text-stroke:0.3px #f4f4f4;">Edge Model</div>
<div class="t" style="left:291.97px;top:64.63px;font-size:6px;line-height:6.70px;color:#9a9a9a;">Rising Edge 254</div>
<div class="t" style="left:288.63px;top:71.33px;font-size:6px;line-height:6.70px;color:#9a9a9a;">Falling Edge 1204</div>
<div class="t" style="left:450.70px;top:43.10px;font-size:9px;line-height:10.05px;color:#f4f4f4;transform:scaleX(0.8650);-webkit-text-stroke:0.3px #f4f4f4;">RJ/PJ Histogram</div>
<div class="t" style="left:549.01px;top:64.93px;font-size:6px;line-height:6.70px;color:#7a7a7a;">Samples: 942k</div>
<div class="t" style="left:366.00px;top:129.43px;font-size:6px;line-height:6.70px;color:#e0e0e0;font-weight:bold;transform:scaleX(0.8950);">-1.20 ps</div>
<div class="t" style="left:478.83px;top:129.43px;font-size:6px;line-height:6.70px;color:#e0e0e0;font-weight:bold;">0 s</div>
<div class="t" style="left:580.15px;top:129.43px;font-size:6px;line-height:6.70px;color:#e0e0e0;font-weight:bold;">1.20 ps</div>
<div class="t" style="left:196.50px;top:147.40px;font-size:9px;line-height:10.05px;color:#f4f4f4;transform:scaleX(0.8354);-webkit-text-stroke:0.3px #f4f4f4;">TJ Histogram</div>
<div class="t" style="left:289.15px;top:169.33px;font-size:6px;line-height:6.70px;color:#7a7a7a;">Samples: 2.83M</div>
<div class="t" style="left:107.00px;top:233.93px;font-size:6px;line-height:6.70px;color:#e0e0e0;font-weight:bold;transform:scaleX(0.9398);">-2.70 ps</div>
<div class="t" style="left:216.83px;top:233.93px;font-size:6px;line-height:6.70px;color:#e0e0e0;font-weight:bold;">0 s</div>
<div class="t" style="left:320.15px;top:233.93px;font-size:6px;line-height:6.70px;color:#e0e0e0;font-weight:bold;">2.70 ps</div>
<div class="t" style="left:453.50px;top:147.40px;font-size:9px;line-height:10.05px;color:#f4f4f4;transform:scaleX(0.8785);-webkit-text-stroke:0.3px #f4f4f4;">DDJ Histogram</div>
<div class="t" style="left:548.35px;top:169.13px;font-size:6px;line-height:6.70px;color:#7a7a7a;">Samples: 1.00M</div>
<div class="t" style="left:366.00px;top:234.43px;font-size:6px;line-height:6.70px;color:#e0e0e0;font-weight:bold;transform:scaleX(0.8950);">-1.00 ps</div>
<div class="t" style="left:475.83px;top:234.43px;font-size:6px;line-height:6.70px;color:#e0e0e0;font-weight:bold;">0 s</div>
<div class="t" style="left:580.15px;top:234.43px;font-size:6px;line-height:6.70px;color:#e0e0e0;font-weight:bold;">1.00 ps</div>
<div class="a" style="left:92.5px;top:249.5px;width:509.5px;height:170.5px;background:#0b0b0b;"></div>
<div class="a" style="left:92.5px;top:248px;width:509.5px;height:1.5px;background:#707070;"></div>
<div class="a" style="left:92.5px;top:249px;width:69.5px;height:18px;border:1.3px solid #707070;border-bottom:none;border-radius:5px 5px 0 0;background:#101010;"></div>
<div class="a" style="left:162px;top:265.5px;width:440px;height:1.5px;background:#5a5a5a;"></div>
<div class="t" style="left:107.50px;top:252.88px;font-size:9.4px;line-height:10.50px;color:#f0f0f0;transform:scaleX(1.0309);-webkit-text-stroke:0.2px #f0f0f0;">Jitter</div>
<svg width="628" height="565"><circle cx="152.6" cy="258" r="6" fill="#181818" stroke="#aaa" stroke-width="1.2"/><path d="M150.6,254.5 L156,258 L150.6,261.5 Z" fill="#ddd"/><circle cx="350.7" cy="256.5" r="7.2" fill="#141414" stroke="#8a8a8a" stroke-width="1.3"/><path d="M347.2,254 L350.7,257.5 L354.2,254 M347.2,257 L350.7,260.5 L354.2,257" fill="none" stroke="#999" stroke-width="1.2"/><path d="M369,252 l3,0 l-.5,4 l1.5,1.5 l-5,0 l1.5,-1.5 Z M370.5,257.5 l0,3" fill="#ddd" stroke="#ddd" stroke-width=".8"/></svg>
<div class="t" style="left:95.20px;top:268.24px;font-size:8px;line-height:8.94px;color:#e8e8e8;transform:scaleX(0.8296);">Src:</div>
<div class="a" style="left:108px;top:269.3px;width:13.299999999999997px;height:7.0px;background:#1c2ad8;"></div>
<div class="t" style="left:109.30px;top:269.41px;font-size:6.4px;line-height:7.15px;color:#fff;font-weight:bold;transform:scaleX(0.8357);">D1A</div>
<div class="t" style="left:127.50px;top:268.24px;font-size:8px;line-height:8.94px;color:#e8e8e8;font-weight:bold;transform:scaleX(0.7248);">Rate:</div>
<div class="t" style="left:145.50px;top:268.24px;font-size:8px;line-height:8.94px;color:#5a5a5a;transform:scaleX(0.8694);">32.000555 Gb/s</div>
<div class="t" style="left:199.50px;top:268.24px;font-size:8px;line-height:8.94px;color:#e8e8e8;font-weight:bold;transform:scaleX(0.8330);">Pat. Length:</div>
<div class="t" style="left:239.50px;top:268.24px;font-size:8px;line-height:8.94px;color:#5a5a5a;transform:scaleX(0.8428);">2047</div>
<div class="a" style="left:93.5px;top:277px;width:254.5px;height:123px;background:#fff;"></div>
<div class="a" style="left:95.5px;top:278.6px;width:116.5px;height:14.199999999999989px;border-bottom:1px solid #ebebeb;border-right:1px solid #f0f0f0;"></div>
<div class="a" style="left:213px;top:278.6px;width:115px;height:14.199999999999989px;border-bottom:1px solid #ebebeb;border-right:1px solid #f0f0f0;"></div>
<div class="t" style="left:97.70px;top:279.93px;font-size:10.4px;line-height:11.62px;color:#3c3c3c;transform:scaleX(0.7778);">TJ (1.0E-12):</div>
<div class="t" style="left:186.30px;top:281.02px;font-size:8.4px;line-height:9.38px;color:#2c30b8;transform:scaleX(0.8093);">5.26 ps</div>
<div class="t" style="left:215.00px;top:279.93px;font-size:10.4px;line-height:11.62px;color:#3c3c3c;transform:scaleX(0.8089);">DJ (δ - δ):</div>
<div class="t" style="left:303.80px;top:281.02px;font-size:8.4px;line-height:9.38px;color:#2c30b8;transform:scaleX(0.8057);">3.38 ps</div>
<div class="a" style="left:95.5px;top:293.4px;width:116.5px;height:14.199999999999989px;border-bottom:1px solid #ebebeb;border-right:1px solid #f0f0f0;"></div>
<div class="a" style="left:213px;top:293.4px;width:115px;height:14.199999999999989px;border-bottom:1px solid #ebebeb;border-right:1px solid #f0f0f0;"></div>
<div class="t" style="left:97.70px;top:294.73px;font-size:10.4px;line-height:11.62px;color:#3c3c3c;transform:scaleX(0.7861);">RJ (rms):</div>
<div class="t" style="left:191.00px;top:295.82px;font-size:8.4px;line-height:9.38px;color:#2c30b8;transform:scaleX(0.7691);">138 fs</div>
<div class="t" style="left:215.00px;top:294.73px;font-size:10.4px;line-height:11.62px;color:#3c3c3c;transform:scaleX(0.7840);">PJ (δ - δ):</div>
<div class="t" style="left:308.40px;top:295.82px;font-size:8.4px;line-height:9.38px;color:#2c30b8;transform:scaleX(0.7691);">680 fs</div>
<div class="a" style="left:95.5px;top:308.3px;width:116.5px;height:14.199999999999989px;border-bottom:1px solid #ebebeb;border-right:1px solid #f0f0f0;"></div>
<div class="a" style="left:213px;top:308.3px;width:115px;height:14.199999999999989px;border-bottom:1px solid #ebebeb;border-right:1px solid #f0f0f0;"></div>
<div class="t" style="left:97.70px;top:309.63px;font-size:10.4px;line-height:11.62px;color:#3c3c3c;transform:scaleX(0.7694);">DDJ (p-p):</div>
<div class="t" style="left:186.80px;top:310.72px;font-size:8.4px;line-height:9.38px;color:#2c30b8;transform:scaleX(0.7912);">3.19 ps</div>
<div class="t" style="left:215.00px;top:309.63px;font-size:10.4px;line-height:11.62px;color:#3c3c3c;transform:scaleX(0.7277);">DCD:</div>
<div class="t" style="left:309.50px;top:310.72px;font-size:8.4px;line-height:9.38px;color:#2c30b8;transform:scaleX(0.7413);">110 fs</div>
<div class="a" style="left:95.5px;top:323.3px;width:116.5px;height:14.199999999999989px;border-bottom:1px solid #ebebeb;border-right:1px solid #f0f0f0;"></div>
<div class="a" style="left:213px;top:323.3px;width:115px;height:14.199999999999989px;border-bottom:1px solid #ebebeb;border-right:1px solid #f0f0f0;"></div>
<div class="t" style="left:97.70px;top:324.63px;font-size:10.4px;line-height:11.62px;color:#3c3c3c;transform:scaleX(0.7659);">PJ (rms):</div>
<div class="t" style="left:191.00px;top:325.72px;font-size:8.4px;line-height:9.38px;color:#2c30b8;transform:scaleX(0.7691);">188 fs</div>
<div class="t" style="left:215.00px;top:324.63px;font-size:10.4px;line-height:11.62px;color:#3c3c3c;transform:scaleX(0.8184);">ISI-J (p-p):</div>
<div class="t" style="left:304.20px;top:325.72px;font-size:8.4px;line-height:9.38px;color:#2c30b8;transform:scaleX(0.7912);">3.19 ps</div>
<div class="a" style="left:95.8px;top:293.3px;width:116.2px;height:14.099999999999966px;border:1.6px solid #8cb8cc;border-radius:2px;"></div>
<div class="a" style="left:95px;top:402px;width:15.599999999999994px;height:14px;border-radius:2px;background:linear-gradient(#f4f4f4,#d8d8d8 60%,#c4c4c4);border:1px solid #888;"></div>
<div class="t" style="left:98.67px;top:403.20px;font-size:11px;line-height:12.29px;color:#e01010;font-weight:bold;">✗</div>
<div class="a" style="left:114.4px;top:402px;width:33.599999999999994px;height:14px;border-radius:2px;background:linear-gradient(#f4f4f4,#d8d8d8 60%,#c4c4c4);border:1px solid #888;"></div>
<div class="t" style="left:116.30px;top:403.77px;font-size:9.6px;line-height:10.72px;color:#3a3a3a;transform:scaleX(0.8087);">Details...</div>
<div class="a" style="left:151.7px;top:402px;width:30.5px;height:14px;border-radius:2px;background:linear-gradient(#f4f4f4,#d8d8d8 60%,#c4c4c4);border:1px solid #888;"></div>
<div class="t" style="left:153.70px;top:403.77px;font-size:9.6px;line-height:10.72px;color:#3a3a3a;transform:scaleX(0.8195);">Limits...</div>
<div class="a" style="left:320px;top:402px;width:22.69999999999999px;height:14.300000000000011px;border-radius:2px;background:#c8f0b8;border:1.5px solid #9a9a9a;box-shadow:inset 0 0 0 2px #e8ffe0;"></div>
<div class="a" style="left:323px;top:407px;width:17px;height:4px;background:#a8e898;"></div>
<div class="a" style="left:16px;top:418.8px;width:586px;height:3.1999999999999886px;background:linear-gradient(#2a2a2a,#606060,#2a2a2a);"></div>
<div class="a" style="left:340px;top:248.8px;width:262px;height:1.1999999999999886px;background:#6a6a6a;"></div>
<div class="a" style="left:470.7px;top:248.8px;width:69.30000000000001px;height:18.19999999999999px;border:1.3px solid #7a7a7a;border-bottom:1.3px solid #7a7a7a;border-radius:5px 5px 0 0;background:#1a1a1a;"></div>
<div class="t" style="left:493.40px;top:254.51px;font-size:8.6px;line-height:9.61px;color:#a8a8a8;transform:scaleX(0.9701);">Amplitude</div>
<svg width="628" height="565"><circle cx="547.2" cy="258" r="6" fill="#111" stroke="#9a9a9a" stroke-width="1.2"/><path d="M549.5,254.8 L544.5,258 L549.5,261.2 Z" fill="#ddd"/></svg>
<div class="t" style="left:562.70px;top:253.09px;font-size:9px;line-height:10.05px;color:#fafafa;font-weight:bold;transform:scaleX(0.8639);">Waveform</div>
<div class="a" style="left:351px;top:267px;width:251px;height:151.5px;background:#000;"></div>
<div class="a" style="left:349.6px;top:249px;width:2.1999999999999886px;height:171px;background:#8a8a8a;"></div>
<div class="a" style="left:340px;top:265.8px;width:262px;height:1.599999999999966px;background:#7a7a7a;"></div>
<svg width="628" height="565"><circle cx="350.7" cy="256.5" r="7.2" fill="#141414" stroke="#8a8a8a" stroke-width="1.4"/><path d="M347.2,254 L350.7,257.5 L354.2,254 M347.2,257 L350.7,260.5 L354.2,257" fill="none" stroke="#8a8a8a" stroke-width="1.5"/></svg>
<svg width="628" height="565"><defs><clipPath id="ec"><rect x="359.6" y="276" width="218.0" height="133.2"/></clipPath></defs><path d="M381.4,276 L381.4,409.2 M403.2,276 L403.2,409.2 M425.0,276 L425.0,409.2 M446.8,276 L446.8,409.2 M468.6,276 L468.6,409.2 M490.4,276 L490.4,409.2 M512.2,276 L512.2,409.2 M534.0,276 L534.0,409.2 M555.8,276 L555.8,409.2 M359.6,292.6 L577.6,292.6 M359.6,309.3 L577.6,309.3 M359.6,325.9 L577.6,325.9 M359.6,342.6 L577.6,342.6 M359.6,359.2 L577.6,359.2 M359.6,375.9 L577.6,375.9 M359.6,392.5 L577.6,392.5" stroke="#a0a0a0" stroke-width="0.9" stroke-dasharray="1.2 2.6" opacity=".55"/><g clip-path="url(#ec)"><path d="M139.3,378.9 L141.3,378.9 L143.3,378.8 L145.3,378.7 L147.3,378.7 L149.3,378.6 L151.3,378.5 L153.3,378.5 L155.3,378.4 L157.3,378.3 L159.3,378.2 L161.3,378.1 L163.3,378.0 L165.3,377.9 L167.3,377.8 L169.3,377.6 L171.3,377.5 L173.3,377.4 L175.3,377.2 L177.3,377.0 L179.3,376.8 L181.3,376.6 L183.3,376.4 L185.3,376.2 L187.3,376.0 L189.3,375.7 L191.3,375.5 L193.3,375.2 L195.3,374.9 L197.3,374.6 L199.3,374.2 L201.3,373.9 L203.3,373.5 L205.3,373.1 L207.3,372.6 L209.3,372.2 L211.3,371.7 L213.3,371.2 L215.3,370.6 L217.3,370.1 L219.3,369.5 L221.3,368.8 L223.3,368.2 L225.3,367.5 L227.3,366.7 L229.3,365.9 L231.3,365.1 L233.3,364.3 L235.3,363.4 L237.3,362.5 L239.3,361.6 L241.3,360.6 L243.3,359.6 L245.3,358.5 L247.3,357.4 L249.3,356.3 L251.3,355.2 L253.3,354.0 L255.3,352.8 L257.3,351.6 L259.3,350.3 L261.3,349.1 L263.3,347.8 L265.3,346.5 L267.3,345.2 L269.3,343.9 L271.3,342.6 L273.3,341.3 L275.3,340.0 L277.3,338.7 L279.3,337.4 L281.3,336.1 L283.3,334.9 L285.3,333.6 L287.3,332.4 L289.3,331.2 L291.3,330.0 L293.3,328.9 L295.3,327.8 L297.3,326.7 L299.3,325.6 L301.3,324.6 L303.3,323.6 L305.3,322.7 L307.3,321.8 L309.3,320.9 L311.3,320.1 L313.3,319.3 L315.3,318.5 L317.3,317.7 L319.3,317.0 L321.3,316.4 L323.3,315.7 L325.3,315.1 L327.3,314.6 L329.3,314.0 L331.3,313.5 L333.3,313.0 L335.3,312.6 L337.3,312.1 L339.3,311.7 L341.3,311.3 L343.3,311.0 L345.3,310.6 L347.3,310.3 L349.3,310.0 L351.3,309.7 L353.3,309.5 L355.3,309.2 L357.3,309.0 L359.3,308.8 L361.3,308.6 L363.3,308.4 L365.3,308.2 L367.3,308.0 L369.3,307.8 L371.3,307.7 L373.3,307.6 L375.3,307.4 L377.3,307.3 L379.3,307.2 L381.3,307.1 L383.3,307.0 L385.3,306.9 L387.3,306.8 L389.3,306.7 L391.3,306.7 L393.3,306.6 L395.3,306.5 L397.3,306.5 L399.3,306.4 L401.3,306.3 L403.3,306.3 M139.3,306.3 L141.3,306.3 L143.3,306.4 L145.3,306.5 L147.3,306.5 L149.3,306.6 L151.3,306.7 L153.3,306.7 L155.3,306.8 L157.3,306.9 L159.3,307.0 L161.3,307.1 L163.3,307.2 L165.3,307.3 L167.3,307.4 L169.3,307.6 L171.3,307.7 L173.3,307.8 L175.3,308.0 L177.3,308.2 L179.3,308.4 L181.3,308.6 L183.3,308.8 L185.3,309.0 L187.3,309.2 L189.3,309.5 L191.3,309.7 L193.3,310.0 L195.3,310.3 L197.3,310.6 L199.3,311.0 L201.3,311.3 L203.3,311.7 L205.3,312.1 L207.3,312.6 L209.3,313.0 L211.3,313.5 L213.3,314.0 L215.3,314.6 L217.3,315.1 L219.3,315.7 L221.3,316.4 L223.3,317.0 L225.3,317.7 L227.3,318.5 L229.3,319.3 L231.3,320.1 L233.3,320.9 L235.3,321.8 L237.3,322.7 L239.3,323.6 L241.3,324.6 L243.3,325.6 L245.3,326.7 L247.3,327.8 L249.3,328.9 L251.3,330.0 L253.3,331.2 L255.3,332.4 L257.3,333.6 L259.3,334.9 L261.3,336.1 L263.3,337.4 L265.3,338.7 L267.3,340.0 L269.3,341.3 L271.3,342.6 L273.3,343.9 L275.3,345.2 L277.3,346.5 L279.3,347.8 L281.3,349.1 L283.3,350.3 L285.3,351.6 L287.3,352.8 L289.3,354.0 L291.3,355.2 L293.3,356.3 L295.3,357.4 L297.3,358.5 L299.3,359.6 L301.3,360.6 L303.3,361.6 L305.3,362.5 L307.3,363.4 L309.3,364.3 L311.3,365.1 L313.3,365.9 L315.3,366.7 L317.3,367.5 L319.3,368.2 L321.3,368.8 L323.3,369.5 L325.3,370.1 L327.3,370.6 L329.3,371.2 L331.3,371.7 L333.3,372.2 L335.3,372.6 L337.3,373.1 L339.3,373.5 L341.3,373.9 L343.3,374.2 L345.3,374.6 L347.3,374.9 L349.3,375.2 L351.3,375.5 L353.3,375.7 L355.3,376.0 L357.3,376.2 L359.3,376.4 L361.3,376.6 L363.3,376.8 L365.3,377.0 L367.3,377.2 L369.3,377.4 L371.3,377.5 L373.3,377.6 L375.3,377.8 L377.3,377.9 L379.3,378.0 L381.3,378.1 L383.3,378.2 L385.3,378.3 L387.3,378.4 L389.3,378.5 L391.3,378.5 L393.3,378.6 L395.3,378.7 L397.3,378.7 L399.3,378.8 L401.3,378.9 L403.3,378.9 M270.8,378.9 L272.8,378.9 L274.8,378.8 L276.8,378.7 L278.8,378.7 L280.8,378.6 L282.8,378.5 L284.8,378.5 L286.8,378.4 L288.8,378.3 L290.8,378.2 L292.8,378.1 L294.8,378.0 L296.8,377.9 L298.8,377.8 L300.8,377.6 L302.8,377.5 L304.8,377.4 L306.8,377.2 L308.8,377.0 L310.8,376.8 L312.8,376.6 L314.8,376.4 L316.8,376.2 L318.8,376.0 L320.8,375.7 L322.8,375.5 L324.8,375.2 L326.8,374.9 L328.8,374.6 L330.8,374.2 L332.8,373.9 L334.8,373.5 L336.8,373.1 L338.8,372.6 L340.8,372.2 L342.8,371.7 L344.8,371.2 L346.8,370.6 L348.8,370.1 L350.8,369.5 L352.8,368.8 L354.8,368.2 L356.8,367.5 L358.8,366.7 L360.8,365.9 L362.8,365.1 L364.8,364.3 L366.8,363.4 L368.8,362.5 L370.8,361.6 L372.8,360.6 L374.8,359.6 L376.8,358.5 L378.8,357.4 L380.8,356.3 L382.8,355.2 L384.8,354.0 L386.8,352.8 L388.8,351.6 L390.8,350.3 L392.8,349.1 L394.8,347.8 L396.8,346.5 L398.8,345.2 L400.8,343.9 L402.8,342.6 L404.8,341.3 L406.8,340.0 L408.8,338.7 L410.8,337.4 L412.8,336.1 L414.8,334.9 L416.8,333.6 L418.8,332.4 L420.8,331.2 L422.8,330.0 L424.8,328.9 L426.8,327.8 L428.8,326.7 L430.8,325.6 L432.8,324.6 L434.8,323.6 L436.8,322.7 L438.8,321.8 L440.8,320.9 L442.8,320.1 L444.8,319.3 L446.8,318.5 L448.8,317.7 L450.8,317.0 L452.8,316.4 L454.8,315.7 L456.8,315.1 L458.8,314.6 L460.8,314.0 L462.8,313.5 L464.8,313.0 L466.8,312.6 L468.8,312.1 L470.8,311.7 L472.8,311.3 L474.8,311.0 L476.8,310.6 L478.8,310.3 L480.8,310.0 L482.8,309.7 L484.8,309.5 L486.8,309.2 L488.8,309.0 L490.8,308.8 L492.8,308.6 L494.8,308.4 L496.8,308.2 L498.8,308.0 L500.8,307.8 L502.8,307.7 L504.8,307.6 L506.8,307.4 L508.8,307.3 L510.8,307.2 L512.8,307.1 L514.8,307.0 L516.8,306.9 L518.8,306.8 L520.8,306.7 L522.8,306.7 L524.8,306.6 L526.8,306.5 L528.8,306.5 L530.8,306.4 L532.8,306.3 L534.8,306.3 M270.8,306.3 L272.8,306.3 L274.8,306.4 L276.8,306.5 L278.8,306.5 L280.8,306.6 L282.8,306.7 L284.8,306.7 L286.8,306.8 L288.8,306.9 L290.8,307.0 L292.8,307.1 L294.8,307.2 L296.8,307.3 L298.8,307.4 L300.8,307.6 L302.8,307.7 L304.8,307.8 L306.8,308.0 L308.8,308.2 L310.8,308.4 L312.8,308.6 L314.8,308.8 L316.8,309.0 L318.8,309.2 L320.8,309.5 L322.8,309.7 L324.8,310.0 L326.8,310.3 L328.8,310.6 L330.8,311.0 L332.8,311.3 L334.8,311.7 L336.8,312.1 L338.8,312.6 L340.8,313.0 L342.8,313.5 L344.8,314.0 L346.8,314.6 L348.8,315.1 L350.8,315.7 L352.8,316.4 L354.8,317.0 L356.8,317.7 L358.8,318.5 L360.8,319.3 L362.8,320.1 L364.8,320.9 L366.8,321.8 L368.8,322.7 L370.8,323.6 L372.8,324.6 L374.8,325.6 L376.8,326.7 L378.8,327.8 L380.8,328.9 L382.8,330.0 L384.8,331.2 L386.8,332.4 L388.8,333.6 L390.8,334.9 L392.8,336.1 L394.8,337.4 L396.8,338.7 L398.8,340.0 L400.8,341.3 L402.8,342.6 L404.8,343.9 L406.8,345.2 L408.8,346.5 L410.8,347.8 L412.8,349.1 L414.8,350.3 L416.8,351.6 L418.8,352.8 L420.8,354.0 L422.8,355.2 L424.8,356.3 L426.8,357.4 L428.8,358.5 L430.8,359.6 L432.8,360.6 L434.8,361.6 L436.8,362.5 L438.8,363.4 L440.8,364.3 L442.8,365.1 L444.8,365.9 L446.8,366.7 L448.8,367.5 L450.8,368.2 L452.8,368.8 L454.8,369.5 L456.8,370.1 L458.8,370.6 L460.8,371.2 L462.8,371.7 L464.8,372.2 L466.8,372.6 L468.8,373.1 L470.8,373.5 L472.8,373.9 L474.8,374.2 L476.8,374.6 L478.8,374.9 L480.8,375.2 L482.8,375.5 L484.8,375.7 L486.8,376.0 L488.8,376.2 L490.8,376.4 L492.8,376.6 L494.8,376.8 L496.8,377.0 L498.8,377.2 L500.8,377.4 L502.8,377.5 L504.8,377.6 L506.8,377.8 L508.8,377.9 L510.8,378.0 L512.8,378.1 L514.8,378.2 L516.8,378.3 L518.8,378.4 L520.8,378.5 L522.8,378.5 L524.8,378.6 L526.8,378.7 L528.8,378.7 L530.8,378.8 L532.8,378.9 L534.8,378.9 M402.3,378.9 L404.3,378.9 L406.3,378.8 L408.3,378.7 L410.3,378.7 L412.3,378.6 L414.3,378.5 L416.3,378.5 L418.3,378.4 L420.3,378.3 L422.3,378.2 L424.3,378.1 L426.3,378.0 L428.3,377.9 L430.3,377.8 L432.3,377.6 L434.3,377.5 L436.3,377.4 L438.3,377.2 L440.3,377.0 L442.3,376.8 L444.3,376.6 L446.3,376.4 L448.3,376.2 L450.3,376.0 L452.3,375.7 L454.3,375.5 L456.3,375.2 L458.3,374.9 L460.3,374.6 L462.3,374.2 L464.3,373.9 L466.3,373.5 L468.3,373.1 L470.3,372.6 L472.3,372.2 L474.3,371.7 L476.3,371.2 L478.3,370.6 L480.3,370.1 L482.3,369.5 L484.3,368.8 L486.3,368.2 L488.3,367.5 L490.3,366.7 L492.3,365.9 L494.3,365.1 L496.3,364.3 L498.3,363.4 L500.3,362.5 L502.3,361.6 L504.3,360.6 L506.3,359.6 L508.3,358.5 L510.3,357.4 L512.3,356.3 L514.3,355.2 L516.3,354.0 L518.3,352.8 L520.3,351.6 L522.3,350.3 L524.3,349.1 L526.3,347.8 L528.3,346.5 L530.3,345.2 L532.3,343.9 L534.3,342.6 L536.3,341.3 L538.3,340.0 L540.3,338.7 L542.3,337.4 L544.3,336.1 L546.3,334.9 L548.3,333.6 L550.3,332.4 L552.3,331.2 L554.3,330.0 L556.3,328.9 L558.3,327.8 L560.3,326.7 L562.3,325.6 L564.3,324.6 L566.3,323.6 L568.3,322.7 L570.3,321.8 L572.3,320.9 L574.3,320.1 L576.3,319.3 L578.3,318.5 L580.3,317.7 L582.3,317.0 L584.3,316.4 L586.3,315.7 L588.3,315.1 L590.3,314.6 L592.3,314.0 L594.3,313.5 L596.3,313.0 L598.3,312.6 L600.3,312.1 L602.3,311.7 L604.3,311.3 L606.3,311.0 L608.3,310.6 L610.3,310.3 L612.3,310.0 L614.3,309.7 L616.3,309.5 L618.3,309.2 L620.3,309.0 L622.3,308.8 L624.3,308.6 L626.3,308.4 L628.3,308.2 L630.3,308.0 L632.3,307.8 L634.3,307.7 L636.3,307.6 L638.3,307.4 L640.3,307.3 L642.3,307.2 L644.3,307.1 L646.3,307.0 L648.3,306.9 L650.3,306.8 L652.3,306.7 L654.3,306.7 L656.3,306.6 L658.3,306.5 L660.3,306.5 L662.3,306.4 L664.3,306.3 L666.3,306.3 M402.3,306.3 L404.3,306.3 L406.3,306.4 L408.3,306.5 L410.3,306.5 L412.3,306.6 L414.3,306.7 L416.3,306.7 L418.3,306.8 L420.3,306.9 L422.3,307.0 L424.3,307.1 L426.3,307.2 L428.3,307.3 L430.3,307.4 L432.3,307.6 L434.3,307.7 L436.3,307.8 L438.3,308.0 L440.3,308.2 L442.3,308.4 L444.3,308.6 L446.3,308.8 L448.3,309.0 L450.3,309.2 L452.3,309.5 L454.3,309.7 L456.3,310.0 L458.3,310.3 L460.3,310.6 L462.3,311.0 L464.3,311.3 L466.3,311.7 L468.3,312.1 L470.3,312.6 L472.3,313.0 L474.3,313.5 L476.3,314.0 L478.3,314.6 L480.3,315.1 L482.3,315.7 L484.3,316.4 L486.3,317.0 L488.3,317.7 L490.3,318.5 L492.3,319.3 L494.3,320.1 L496.3,320.9 L498.3,321.8 L500.3,322.7 L502.3,323.6 L504.3,324.6 L506.3,325.6 L508.3,326.7 L510.3,327.8 L512.3,328.9 L514.3,330.0 L516.3,331.2 L518.3,332.4 L520.3,333.6 L522.3,334.9 L524.3,336.1 L526.3,337.4 L528.3,338.7 L530.3,340.0 L532.3,341.3 L534.3,342.6 L536.3,343.9 L538.3,345.2 L540.3,346.5 L542.3,347.8 L544.3,349.1 L546.3,350.3 L548.3,351.6 L550.3,352.8 L552.3,354.0 L554.3,355.2 L556.3,356.3 L558.3,357.4 L560.3,358.5 L562.3,359.6 L564.3,360.6 L566.3,361.6 L568.3,362.5 L570.3,363.4 L572.3,364.3 L574.3,365.1 L576.3,365.9 L578.3,366.7 L580.3,367.5 L582.3,368.2 L584.3,368.8 L586.3,369.5 L588.3,370.1 L590.3,370.6 L592.3,371.2 L594.3,371.7 L596.3,372.2 L598.3,372.6 L600.3,373.1 L602.3,373.5 L604.3,373.9 L606.3,374.2 L608.3,374.6 L610.3,374.9 L612.3,375.2 L614.3,375.5 L616.3,375.7 L618.3,376.0 L620.3,376.2 L622.3,376.4 L624.3,376.6 L626.3,376.8 L628.3,377.0 L630.3,377.2 L632.3,377.4 L634.3,377.5 L636.3,377.6 L638.3,377.8 L640.3,377.9 L642.3,378.0 L644.3,378.1 L646.3,378.2 L648.3,378.3 L650.3,378.4 L652.3,378.5 L654.3,378.5 L656.3,378.6 L658.3,378.7 L660.3,378.7 L662.3,378.8 L664.3,378.9 L666.3,378.9 M533.8,378.9 L535.8,378.9 L537.8,378.8 L539.8,378.7 L541.8,378.7 L543.8,378.6 L545.8,378.5 L547.8,378.5 L549.8,378.4 L551.8,378.3 L553.8,378.2 L555.8,378.1 L557.8,378.0 L559.8,377.9 L561.8,377.8 L563.8,377.6 L565.8,377.5 L567.8,377.4 L569.8,377.2 L571.8,377.0 L573.8,376.8 L575.8,376.6 L577.8,376.4 L579.8,376.2 L581.8,376.0 L583.8,375.7 L585.8,375.5 L587.8,375.2 L589.8,374.9 L591.8,374.6 L593.8,374.2 L595.8,373.9 L597.8,373.5 L599.8,373.1 L601.8,372.6 L603.8,372.2 L605.8,371.7 L607.8,371.2 L609.8,370.6 L611.8,370.1 L613.8,369.5 L615.8,368.8 L617.8,368.2 L619.8,367.5 L621.8,366.7 L623.8,365.9 L625.8,365.1 L627.8,364.3 L629.8,363.4 L631.8,362.5 L633.8,361.6 L635.8,360.6 L637.8,359.6 L639.8,358.5 L641.8,357.4 L643.8,356.3 L645.8,355.2 L647.8,354.0 L649.8,352.8 L651.8,351.6 L653.8,350.3 L655.8,349.1 L657.8,347.8 L659.8,346.5 L661.8,345.2 L663.8,343.9 L665.8,342.6 L667.8,341.3 L669.8,340.0 L671.8,338.7 L673.8,337.4 L675.8,336.1 L677.8,334.9 L679.8,333.6 L681.8,332.4 L683.8,331.2 L685.8,330.0 L687.8,328.9 L689.8,327.8 L691.8,326.7 L693.8,325.6 L695.8,324.6 L697.8,323.6 L699.8,322.7 L701.8,321.8 L703.8,320.9 L705.8,320.1 L707.8,319.3 L709.8,318.5 L711.8,317.7 L713.8,317.0 L715.8,316.4 L717.8,315.7 L719.8,315.1 L721.8,314.6 L723.8,314.0 L725.8,313.5 L727.8,313.0 L729.8,312.6 L731.8,312.1 L733.8,311.7 L735.8,311.3 L737.8,311.0 L739.8,310.6 L741.8,310.3 L743.8,310.0 L745.8,309.7 L747.8,309.5 L749.8,309.2 L751.8,309.0 L753.8,308.8 L755.8,308.6 L757.8,308.4 L759.8,308.2 L761.8,308.0 L763.8,307.8 L765.8,307.7 L767.8,307.6 L769.8,307.4 L771.8,307.3 L773.8,307.2 L775.8,307.1 L777.8,307.0 L779.8,306.9 L781.8,306.8 L783.8,306.7 L785.8,306.7 L787.8,306.6 L789.8,306.5 L791.8,306.5 L793.8,306.4 L795.8,306.3 L797.8,306.3 M533.8,306.3 L535.8,306.3 L537.8,306.4 L539.8,306.5 L541.8,306.5 L543.8,306.6 L545.8,306.7 L547.8,306.7 L549.8,306.8 L551.8,306.9 L553.8,307.0 L555.8,307.1 L557.8,307.2 L559.8,307.3 L561.8,307.4 L563.8,307.6 L565.8,307.7 L567.8,307.8 L569.8,308.0 L571.8,308.2 L573.8,308.4 L575.8,308.6 L577.8,308.8 L579.8,309.0 L581.8,309.2 L583.8,309.5 L585.8,309.7 L587.8,310.0 L589.8,310.3 L591.8,310.6 L593.8,311.0 L595.8,311.3 L597.8,311.7 L599.8,312.1 L601.8,312.6 L603.8,313.0 L605.8,313.5 L607.8,314.0 L609.8,314.6 L611.8,315.1 L613.8,315.7 L615.8,316.4 L617.8,317.0 L619.8,317.7 L621.8,318.5 L623.8,319.3 L625.8,320.1 L627.8,320.9 L629.8,321.8 L631.8,322.7 L633.8,323.6 L635.8,324.6 L637.8,325.6 L639.8,326.7 L641.8,327.8 L643.8,328.9 L645.8,330.0 L647.8,331.2 L649.8,332.4 L651.8,333.6 L653.8,334.9 L655.8,336.1 L657.8,337.4 L659.8,338.7 L661.8,340.0 L663.8,341.3 L665.8,342.6 L667.8,343.9 L669.8,345.2 L671.8,346.5 L673.8,347.8 L675.8,349.1 L677.8,350.3 L679.8,351.6 L681.8,352.8 L683.8,354.0 L685.8,355.2 L687.8,356.3 L689.8,357.4 L691.8,358.5 L693.8,359.6 L695.8,360.6 L697.8,361.6 L699.8,362.5 L701.8,363.4 L703.8,364.3 L705.8,365.1 L707.8,365.9 L709.8,366.7 L711.8,367.5 L713.8,368.2 L715.8,368.8 L717.8,369.5 L719.8,370.1 L721.8,370.6 L723.8,371.2 L725.8,371.7 L727.8,372.2 L729.8,372.6 L731.8,373.1 L733.8,373.5 L735.8,373.9 L737.8,374.2 L739.8,374.6 L741.8,374.9 L743.8,375.2 L745.8,375.5 L747.8,375.7 L749.8,376.0 L751.8,376.2 L753.8,376.4 L755.8,376.6 L757.8,376.8 L759.8,377.0 L761.8,377.2 L763.8,377.4 L765.8,377.5 L767.8,377.6 L769.8,377.8 L771.8,377.9 L773.8,378.0 L775.8,378.1 L777.8,378.2 L779.8,378.3 L781.8,378.4 L783.8,378.5 L785.8,378.5 L787.8,378.6 L789.8,378.7 L791.8,378.7 L793.8,378.8 L795.8,378.9 L797.8,378.9 M359.6,306.3 L577.6,306.3 M359.6,378.9 L577.6,378.9" fill="none" stroke="#1a3490" stroke-width="8.2" opacity=".55"/><path d="M139.3,378.9 L141.3,378.9 L143.3,378.8 L145.3,378.7 L147.3,378.7 L149.3,378.6 L151.3,378.5 L153.3,378.5 L155.3,378.4 L157.3,378.3 L159.3,378.2 L161.3,378.1 L163.3,378.0 L165.3,377.9 L167.3,377.8 L169.3,377.6 L171.3,377.5 L173.3,377.4 L175.3,377.2 L177.3,377.0 L179.3,376.8 L181.3,376.6 L183.3,376.4 L185.3,376.2 L187.3,376.0 L189.3,375.7 L191.3,375.5 L193.3,375.2 L195.3,374.9 L197.3,374.6 L199.3,374.2 L201.3,373.9 L203.3,373.5 L205.3,373.1 L207.3,372.6 L209.3,372.2 L211.3,371.7 L213.3,371.2 L215.3,370.6 L217.3,370.1 L219.3,369.5 L221.3,368.8 L223.3,368.2 L225.3,367.5 L227.3,366.7 L229.3,365.9 L231.3,365.1 L233.3,364.3 L235.3,363.4 L237.3,362.5 L239.3,361.6 L241.3,360.6 L243.3,359.6 L245.3,358.5 L247.3,357.4 L249.3,356.3 L251.3,355.2 L253.3,354.0 L255.3,352.8 L257.3,351.6 L259.3,350.3 L261.3,349.1 L263.3,347.8 L265.3,346.5 L267.3,345.2 L269.3,343.9 L271.3,342.6 L273.3,341.3 L275.3,340.0 L277.3,338.7 L279.3,337.4 L281.3,336.1 L283.3,334.9 L285.3,333.6 L287.3,332.4 L289.3,331.2 L291.3,330.0 L293.3,328.9 L295.3,327.8 L297.3,326.7 L299.3,325.6 L301.3,324.6 L303.3,323.6 L305.3,322.7 L307.3,321.8 L309.3,320.9 L311.3,320.1 L313.3,319.3 L315.3,318.5 L317.3,317.7 L319.3,317.0 L321.3,316.4 L323.3,315.7 L325.3,315.1 L327.3,314.6 L329.3,314.0 L331.3,313.5 L333.3,313.0 L335.3,312.6 L337.3,312.1 L339.3,311.7 L341.3,311.3 L343.3,311.0 L345.3,310.6 L347.3,310.3 L349.3,310.0 L351.3,309.7 L353.3,309.5 L355.3,309.2 L357.3,309.0 L359.3,308.8 L361.3,308.6 L363.3,308.4 L365.3,308.2 L367.3,308.0 L369.3,307.8 L371.3,307.7 L373.3,307.6 L375.3,307.4 L377.3,307.3 L379.3,307.2 L381.3,307.1 L383.3,307.0 L385.3,306.9 L387.3,306.8 L389.3,306.7 L391.3,306.7 L393.3,306.6 L395.3,306.5 L397.3,306.5 L399.3,306.4 L401.3,306.3 L403.3,306.3 M139.3,306.3 L141.3,306.3 L143.3,306.4 L145.3,306.5 L147.3,306.5 L149.3,306.6 L151.3,306.7 L153.3,306.7 L155.3,306.8 L157.3,306.9 L159.3,307.0 L161.3,307.1 L163.3,307.2 L165.3,307.3 L167.3,307.4 L169.3,307.6 L171.3,307.7 L173.3,307.8 L175.3,308.0 L177.3,308.2 L179.3,308.4 L181.3,308.6 L183.3,308.8 L185.3,309.0 L187.3,309.2 L189.3,309.5 L191.3,309.7 L193.3,310.0 L195.3,310.3 L197.3,310.6 L199.3,311.0 L201.3,311.3 L203.3,311.7 L205.3,312.1 L207.3,312.6 L209.3,313.0 L211.3,313.5 L213.3,314.0 L215.3,314.6 L217.3,315.1 L219.3,315.7 L221.3,316.4 L223.3,317.0 L225.3,317.7 L227.3,318.5 L229.3,319.3 L231.3,320.1 L233.3,320.9 L235.3,321.8 L237.3,322.7 L239.3,323.6 L241.3,324.6 L243.3,325.6 L245.3,326.7 L247.3,327.8 L249.3,328.9 L251.3,330.0 L253.3,331.2 L255.3,332.4 L257.3,333.6 L259.3,334.9 L261.3,336.1 L263.3,337.4 L265.3,338.7 L267.3,340.0 L269.3,341.3 L271.3,342.6 L273.3,343.9 L275.3,345.2 L277.3,346.5 L279.3,347.8 L281.3,349.1 L283.3,350.3 L285.3,351.6 L287.3,352.8 L289.3,354.0 L291.3,355.2 L293.3,356.3 L295.3,357.4 L297.3,358.5 L299.3,359.6 L301.3,360.6 L303.3,361.6 L305.3,362.5 L307.3,363.4 L309.3,364.3 L311.3,365.1 L313.3,365.9 L315.3,366.7 L317.3,367.5 L319.3,368.2 L321.3,368.8 L323.3,369.5 L325.3,370.1 L327.3,370.6 L329.3,371.2 L331.3,371.7 L333.3,372.2 L335.3,372.6 L337.3,373.1 L339.3,373.5 L341.3,373.9 L343.3,374.2 L345.3,374.6 L347.3,374.9 L349.3,375.2 L351.3,375.5 L353.3,375.7 L355.3,376.0 L357.3,376.2 L359.3,376.4 L361.3,376.6 L363.3,376.8 L365.3,377.0 L367.3,377.2 L369.3,377.4 L371.3,377.5 L373.3,377.6 L375.3,377.8 L377.3,377.9 L379.3,378.0 L381.3,378.1 L383.3,378.2 L385.3,378.3 L387.3,378.4 L389.3,378.5 L391.3,378.5 L393.3,378.6 L395.3,378.7 L397.3,378.7 L399.3,378.8 L401.3,378.9 L403.3,378.9 M270.8,378.9 L272.8,378.9 L274.8,378.8 L276.8,378.7 L278.8,378.7 L280.8,378.6 L282.8,378.5 L284.8,378.5 L286.8,378.4 L288.8,378.3 L290.8,378.2 L292.8,378.1 L294.8,378.0 L296.8,377.9 L298.8,377.8 L300.8,377.6 L302.8,377.5 L304.8,377.4 L306.8,377.2 L308.8,377.0 L310.8,376.8 L312.8,376.6 L314.8,376.4 L316.8,376.2 L318.8,376.0 L320.8,375.7 L322.8,375.5 L324.8,375.2 L326.8,374.9 L328.8,374.6 L330.8,374.2 L332.8,373.9 L334.8,373.5 L336.8,373.1 L338.8,372.6 L340.8,372.2 L342.8,371.7 L344.8,371.2 L346.8,370.6 L348.8,370.1 L350.8,369.5 L352.8,368.8 L354.8,368.2 L356.8,367.5 L358.8,366.7 L360.8,365.9 L362.8,365.1 L364.8,364.3 L366.8,363.4 L368.8,362.5 L370.8,361.6 L372.8,360.6 L374.8,359.6 L376.8,358.5 L378.8,357.4 L380.8,356.3 L382.8,355.2 L384.8,354.0 L386.8,352.8 L388.8,351.6 L390.8,350.3 L392.8,349.1 L394.8,347.8 L396.8,346.5 L398.8,345.2 L400.8,343.9 L402.8,342.6 L404.8,341.3 L406.8,340.0 L408.8,338.7 L410.8,337.4 L412.8,336.1 L414.8,334.9 L416.8,333.6 L418.8,332.4 L420.8,331.2 L422.8,330.0 L424.8,328.9 L426.8,327.8 L428.8,326.7 L430.8,325.6 L432.8,324.6 L434.8,323.6 L436.8,322.7 L438.8,321.8 L440.8,320.9 L442.8,320.1 L444.8,319.3 L446.8,318.5 L448.8,317.7 L450.8,317.0 L452.8,316.4 L454.8,315.7 L456.8,315.1 L458.8,314.6 L460.8,314.0 L462.8,313.5 L464.8,313.0 L466.8,312.6 L468.8,312.1 L470.8,311.7 L472.8,311.3 L474.8,311.0 L476.8,310.6 L478.8,310.3 L480.8,310.0 L482.8,309.7 L484.8,309.5 L486.8,309.2 L488.8,309.0 L490.8,308.8 L492.8,308.6 L494.8,308.4 L496.8,308.2 L498.8,308.0 L500.8,307.8 L502.8,307.7 L504.8,307.6 L506.8,307.4 L508.8,307.3 L510.8,307.2 L512.8,307.1 L514.8,307.0 L516.8,306.9 L518.8,306.8 L520.8,306.7 L522.8,306.7 L524.8,306.6 L526.8,306.5 L528.8,306.5 L530.8,306.4 L532.8,306.3 L534.8,306.3 M270.8,306.3 L272.8,306.3 L274.8,306.4 L276.8,306.5 L278.8,306.5 L280.8,306.6 L282.8,306.7 L284.8,306.7 L286.8,306.8 L288.8,306.9 L290.8,307.0 L292.8,307.1 L294.8,307.2 L296.8,307.3 L298.8,307.4 L300.8,307.6 L302.8,307.7 L304.8,307.8 L306.8,308.0 L308.8,308.2 L310.8,308.4 L312.8,308.6 L314.8,308.8 L316.8,309.0 L318.8,309.2 L320.8,309.5 L322.8,309.7 L324.8,310.0 L326.8,310.3 L328.8,310.6 L330.8,311.0 L332.8,311.3 L334.8,311.7 L336.8,312.1 L338.8,312.6 L340.8,313.0 L342.8,313.5 L344.8,314.0 L346.8,314.6 L348.8,315.1 L350.8,315.7 L352.8,316.4 L354.8,317.0 L356.8,317.7 L358.8,318.5 L360.8,319.3 L362.8,320.1 L364.8,320.9 L366.8,321.8 L368.8,322.7 L370.8,323.6 L372.8,324.6 L374.8,325.6 L376.8,326.7 L378.8,327.8 L380.8,328.9 L382.8,330.0 L384.8,331.2 L386.8,332.4 L388.8,333.6 L390.8,334.9 L392.8,336.1 L394.8,337.4 L396.8,338.7 L398.8,340.0 L400.8,341.3 L402.8,342.6 L404.8,343.9 L406.8,345.2 L408.8,346.5 L410.8,347.8 L412.8,349.1 L414.8,350.3 L416.8,351.6 L418.8,352.8 L420.8,354.0 L422.8,355.2 L424.8,356.3 L426.8,357.4 L428.8,358.5 L430.8,359.6 L432.8,360.6 L434.8,361.6 L436.8,362.5 L438.8,363.4 L440.8,364.3 L442.8,365.1 L444.8,365.9 L446.8,366.7 L448.8,367.5 L450.8,368.2 L452.8,368.8 L454.8,369.5 L456.8,370.1 L458.8,370.6 L460.8,371.2 L462.8,371.7 L464.8,372.2 L466.8,372.6 L468.8,373.1 L470.8,373.5 L472.8,373.9 L474.8,374.2 L476.8,374.6 L478.8,374.9 L480.8,375.2 L482.8,375.5 L484.8,375.7 L486.8,376.0 L488.8,376.2 L490.8,376.4 L492.8,376.6 L494.8,376.8 L496.8,377.0 L498.8,377.2 L500.8,377.4 L502.8,377.5 L504.8,377.6 L506.8,377.8 L508.8,377.9 L510.8,378.0 L512.8,378.1 L514.8,378.2 L516.8,378.3 L518.8,378.4 L520.8,378.5 L522.8,378.5 L524.8,378.6 L526.8,378.7 L528.8,378.7 L530.8,378.8 L532.8,378.9 L534.8,378.9 M402.3,378.9 L404.3,378.9 L406.3,378.8 L408.3,378.7 L410.3,378.7 L412.3,378.6 L414.3,378.5 L416.3,378.5 L418.3,378.4 L420.3,378.3 L422.3,378.2 L424.3,378.1 L426.3,378.0 L428.3,377.9 L430.3,377.8 L432.3,377.6 L434.3,377.5 L436.3,377.4 L438.3,377.2 L440.3,377.0 L442.3,376.8 L444.3,376.6 L446.3,376.4 L448.3,376.2 L450.3,376.0 L452.3,375.7 L454.3,375.5 L456.3,375.2 L458.3,374.9 L460.3,374.6 L462.3,374.2 L464.3,373.9 L466.3,373.5 L468.3,373.1 L470.3,372.6 L472.3,372.2 L474.3,371.7 L476.3,371.2 L478.3,370.6 L480.3,370.1 L482.3,369.5 L484.3,368.8 L486.3,368.2 L488.3,367.5 L490.3,366.7 L492.3,365.9 L494.3,365.1 L496.3,364.3 L498.3,363.4 L500.3,362.5 L502.3,361.6 L504.3,360.6 L506.3,359.6 L508.3,358.5 L510.3,357.4 L512.3,356.3 L514.3,355.2 L516.3,354.0 L518.3,352.8 L520.3,351.6 L522.3,350.3 L524.3,349.1 L526.3,347.8 L528.3,346.5 L530.3,345.2 L532.3,343.9 L534.3,342.6 L536.3,341.3 L538.3,340.0 L540.3,338.7 L542.3,337.4 L544.3,336.1 L546.3,334.9 L548.3,333.6 L550.3,332.4 L552.3,331.2 L554.3,330.0 L556.3,328.9 L558.3,327.8 L560.3,326.7 L562.3,325.6 L564.3,324.6 L566.3,323.6 L568.3,322.7 L570.3,321.8 L572.3,320.9 L574.3,320.1 L576.3,319.3 L578.3,318.5 L580.3,317.7 L582.3,317.0 L584.3,316.4 L586.3,315.7 L588.3,315.1 L590.3,314.6 L592.3,314.0 L594.3,313.5 L596.3,313.0 L598.3,312.6 L600.3,312.1 L602.3,311.7 L604.3,311.3 L606.3,311.0 L608.3,310.6 L610.3,310.3 L612.3,310.0 L614.3,309.7 L616.3,309.5 L618.3,309.2 L620.3,309.0 L622.3,308.8 L624.3,308.6 L626.3,308.4 L628.3,308.2 L630.3,308.0 L632.3,307.8 L634.3,307.7 L636.3,307.6 L638.3,307.4 L640.3,307.3 L642.3,307.2 L644.3,307.1 L646.3,307.0 L648.3,306.9 L650.3,306.8 L652.3,306.7 L654.3,306.7 L656.3,306.6 L658.3,306.5 L660.3,306.5 L662.3,306.4 L664.3,306.3 L666.3,306.3 M402.3,306.3 L404.3,306.3 L406.3,306.4 L408.3,306.5 L410.3,306.5 L412.3,306.6 L414.3,306.7 L416.3,306.7 L418.3,306.8 L420.3,306.9 L422.3,307.0 L424.3,307.1 L426.3,307.2 L428.3,307.3 L430.3,307.4 L432.3,307.6 L434.3,307.7 L436.3,307.8 L438.3,308.0 L440.3,308.2 L442.3,308.4 L444.3,308.6 L446.3,308.8 L448.3,309.0 L450.3,309.2 L452.3,309.5 L454.3,309.7 L456.3,310.0 L458.3,310.3 L460.3,310.6 L462.3,311.0 L464.3,311.3 L466.3,311.7 L468.3,312.1 L470.3,312.6 L472.3,313.0 L474.3,313.5 L476.3,314.0 L478.3,314.6 L480.3,315.1 L482.3,315.7 L484.3,316.4 L486.3,317.0 L488.3,317.7 L490.3,318.5 L492.3,319.3 L494.3,320.1 L496.3,320.9 L498.3,321.8 L500.3,322.7 L502.3,323.6 L504.3,324.6 L506.3,325.6 L508.3,326.7 L510.3,327.8 L512.3,328.9 L514.3,330.0 L516.3,331.2 L518.3,332.4 L520.3,333.6 L522.3,334.9 L524.3,336.1 L526.3,337.4 L528.3,338.7 L530.3,340.0 L532.3,341.3 L534.3,342.6 L536.3,343.9 L538.3,345.2 L540.3,346.5 L542.3,347.8 L544.3,349.1 L546.3,350.3 L548.3,351.6 L550.3,352.8 L552.3,354.0 L554.3,355.2 L556.3,356.3 L558.3,357.4 L560.3,358.5 L562.3,359.6 L564.3,360.6 L566.3,361.6 L568.3,362.5 L570.3,363.4 L572.3,364.3 L574.3,365.1 L576.3,365.9 L578.3,366.7 L580.3,367.5 L582.3,368.2 L584.3,368.8 L586.3,369.5 L588.3,370.1 L590.3,370.6 L592.3,371.2 L594.3,371.7 L596.3,372.2 L598.3,372.6 L600.3,373.1 L602.3,373.5 L604.3,373.9 L606.3,374.2 L608.3,374.6 L610.3,374.9 L612.3,375.2 L614.3,375.5 L616.3,375.7 L618.3,376.0 L620.3,376.2 L622.3,376.4 L624.3,376.6 L626.3,376.8 L628.3,377.0 L630.3,377.2 L632.3,377.4 L634.3,377.5 L636.3,377.6 L638.3,377.8 L640.3,377.9 L642.3,378.0 L644.3,378.1 L646.3,378.2 L648.3,378.3 L650.3,378.4 L652.3,378.5 L654.3,378.5 L656.3,378.6 L658.3,378.7 L660.3,378.7 L662.3,378.8 L664.3,378.9 L666.3,378.9 M533.8,378.9 L535.8,378.9 L537.8,378.8 L539.8,378.7 L541.8,378.7 L543.8,378.6 L545.8,378.5 L547.8,378.5 L549.8,378.4 L551.8,378.3 L553.8,378.2 L555.8,378.1 L557.8,378.0 L559.8,377.9 L561.8,377.8 L563.8,377.6 L565.8,377.5 L567.8,377.4 L569.8,377.2 L571.8,377.0 L573.8,376.8 L575.8,376.6 L577.8,376.4 L579.8,376.2 L581.8,376.0 L583.8,375.7 L585.8,375.5 L587.8,375.2 L589.8,374.9 L591.8,374.6 L593.8,374.2 L595.8,373.9 L597.8,373.5 L599.8,373.1 L601.8,372.6 L603.8,372.2 L605.8,371.7 L607.8,371.2 L609.8,370.6 L611.8,370.1 L613.8,369.5 L615.8,368.8 L617.8,368.2 L619.8,367.5 L621.8,366.7 L623.8,365.9 L625.8,365.1 L627.8,364.3 L629.8,363.4 L631.8,362.5 L633.8,361.6 L635.8,360.6 L637.8,359.6 L639.8,358.5 L641.8,357.4 L643.8,356.3 L645.8,355.2 L647.8,354.0 L649.8,352.8 L651.8,351.6 L653.8,350.3 L655.8,349.1 L657.8,347.8 L659.8,346.5 L661.8,345.2 L663.8,343.9 L665.8,342.6 L667.8,341.3 L669.8,340.0 L671.8,338.7 L673.8,337.4 L675.8,336.1 L677.8,334.9 L679.8,333.6 L681.8,332.4 L683.8,331.2 L685.8,330.0 L687.8,328.9 L689.8,327.8 L691.8,326.7 L693.8,325.6 L695.8,324.6 L697.8,323.6 L699.8,322.7 L701.8,321.8 L703.8,320.9 L705.8,320.1 L707.8,319.3 L709.8,318.5 L711.8,317.7 L713.8,317.0 L715.8,316.4 L717.8,315.7 L719.8,315.1 L721.8,314.6 L723.8,314.0 L725.8,313.5 L727.8,313.0 L729.8,312.6 L731.8,312.1 L733.8,311.7 L735.8,311.3 L737.8,311.0 L739.8,310.6 L741.8,310.3 L743.8,310.0 L745.8,309.7 L747.8,309.5 L749.8,309.2 L751.8,309.0 L753.8,308.8 L755.8,308.6 L757.8,308.4 L759.8,308.2 L761.8,308.0 L763.8,307.8 L765.8,307.7 L767.8,307.6 L769.8,307.4 L771.8,307.3 L773.8,307.2 L775.8,307.1 L777.8,307.0 L779.8,306.9 L781.8,306.8 L783.8,306.7 L785.8,306.7 L787.8,306.6 L789.8,306.5 L791.8,306.5 L793.8,306.4 L795.8,306.3 L797.8,306.3 M533.8,306.3 L535.8,306.3 L537.8,306.4 L539.8,306.5 L541.8,306.5 L543.8,306.6 L545.8,306.7 L547.8,306.7 L549.8,306.8 L551.8,306.9 L553.8,307.0 L555.8,307.1 L557.8,307.2 L559.8,307.3 L561.8,307.4 L563.8,307.6 L565.8,307.7 L567.8,307.8 L569.8,308.0 L571.8,308.2 L573.8,308.4 L575.8,308.6 L577.8,308.8 L579.8,309.0 L581.8,309.2 L583.8,309.5 L585.8,309.7 L587.8,310.0 L589.8,310.3 L591.8,310.6 L593.8,311.0 L595.8,311.3 L597.8,311.7 L599.8,312.1 L601.8,312.6 L603.8,313.0 L605.8,313.5 L607.8,314.0 L609.8,314.6 L611.8,315.1 L613.8,315.7 L615.8,316.4 L617.8,317.0 L619.8,317.7 L621.8,318.5 L623.8,319.3 L625.8,320.1 L627.8,320.9 L629.8,321.8 L631.8,322.7 L633.8,323.6 L635.8,324.6 L637.8,325.6 L639.8,326.7 L641.8,327.8 L643.8,328.9 L645.8,330.0 L647.8,331.2 L649.8,332.4 L651.8,333.6 L653.8,334.9 L655.8,336.1 L657.8,337.4 L659.8,338.7 L661.8,340.0 L663.8,341.3 L665.8,342.6 L667.8,343.9 L669.8,345.2 L671.8,346.5 L673.8,347.8 L675.8,349.1 L677.8,350.3 L679.8,351.6 L681.8,352.8 L683.8,354.0 L685.8,355.2 L687.8,356.3 L689.8,357.4 L691.8,358.5 L693.8,359.6 L695.8,360.6 L697.8,361.6 L699.8,362.5 L701.8,363.4 L703.8,364.3 L705.8,365.1 L707.8,365.9 L709.8,366.7 L711.8,367.5 L713.8,368.2 L715.8,368.8 L717.8,369.5 L719.8,370.1 L721.8,370.6 L723.8,371.2 L725.8,371.7 L727.8,372.2 L729.8,372.6 L731.8,373.1 L733.8,373.5 L735.8,373.9 L737.8,374.2 L739.8,374.6 L741.8,374.9 L743.8,375.2 L745.8,375.5 L747.8,375.7 L749.8,376.0 L751.8,376.2 L753.8,376.4 L755.8,376.6 L757.8,376.8 L759.8,377.0 L761.8,377.2 L763.8,377.4 L765.8,377.5 L767.8,377.6 L769.8,377.8 L771.8,377.9 L773.8,378.0 L775.8,378.1 L777.8,378.2 L779.8,378.3 L781.8,378.4 L783.8,378.5 L785.8,378.5 L787.8,378.6 L789.8,378.7 L791.8,378.7 L793.8,378.8 L795.8,378.9 L797.8,378.9 M359.6,306.3 L577.6,306.3 M359.6,378.9 L577.6,378.9" fill="none" stroke="#2446b4" stroke-width="5.6"/><path d="M139.3,378.9 L141.3,378.9 L143.3,378.8 L145.3,378.7 L147.3,378.7 L149.3,378.6 L151.3,378.5 L153.3,378.5 L155.3,378.4 L157.3,378.3 L159.3,378.2 L161.3,378.1 L163.3,378.0 L165.3,377.9 L167.3,377.8 L169.3,377.6 L171.3,377.5 L173.3,377.4 L175.3,377.2 L177.3,377.0 L179.3,376.8 L181.3,376.6 L183.3,376.4 L185.3,376.2 L187.3,376.0 L189.3,375.7 L191.3,375.5 L193.3,375.2 L195.3,374.9 L197.3,374.6 L199.3,374.2 L201.3,373.9 L203.3,373.5 L205.3,373.1 L207.3,372.6 L209.3,372.2 L211.3,371.7 L213.3,371.2 L215.3,370.6 L217.3,370.1 L219.3,369.5 L221.3,368.8 L223.3,368.2 L225.3,367.5 L227.3,366.7 L229.3,365.9 L231.3,365.1 L233.3,364.3 L235.3,363.4 L237.3,362.5 L239.3,361.6 L241.3,360.6 L243.3,359.6 L245.3,358.5 L247.3,357.4 L249.3,356.3 L251.3,355.2 L253.3,354.0 L255.3,352.8 L257.3,351.6 L259.3,350.3 L261.3,349.1 L263.3,347.8 L265.3,346.5 L267.3,345.2 L269.3,343.9 L271.3,342.6 L273.3,341.3 L275.3,340.0 L277.3,338.7 L279.3,337.4 L281.3,336.1 L283.3,334.9 L285.3,333.6 L287.3,332.4 L289.3,331.2 L291.3,330.0 L293.3,328.9 L295.3,327.8 L297.3,326.7 L299.3,325.6 L301.3,324.6 L303.3,323.6 L305.3,322.7 L307.3,321.8 L309.3,320.9 L311.3,320.1 L313.3,319.3 L315.3,318.5 L317.3,317.7 L319.3,317.0 L321.3,316.4 L323.3,315.7 L325.3,315.1 L327.3,314.6 L329.3,314.0 L331.3,313.5 L333.3,313.0 L335.3,312.6 L337.3,312.1 L339.3,311.7 L341.3,311.3 L343.3,311.0 L345.3,310.6 L347.3,310.3 L349.3,310.0 L351.3,309.7 L353.3,309.5 L355.3,309.2 L357.3,309.0 L359.3,308.8 L361.3,308.6 L363.3,308.4 L365.3,308.2 L367.3,308.0 L369.3,307.8 L371.3,307.7 L373.3,307.6 L375.3,307.4 L377.3,307.3 L379.3,307.2 L381.3,307.1 L383.3,307.0 L385.3,306.9 L387.3,306.8 L389.3,306.7 L391.3,306.7 L393.3,306.6 L395.3,306.5 L397.3,306.5 L399.3,306.4 L401.3,306.3 L403.3,306.3 M139.3,306.3 L141.3,306.3 L143.3,306.4 L145.3,306.5 L147.3,306.5 L149.3,306.6 L151.3,306.7 L153.3,306.7 L155.3,306.8 L157.3,306.9 L159.3,307.0 L161.3,307.1 L163.3,307.2 L165.3,307.3 L167.3,307.4 L169.3,307.6 L171.3,307.7 L173.3,307.8 L175.3,308.0 L177.3,308.2 L179.3,308.4 L181.3,308.6 L183.3,308.8 L185.3,309.0 L187.3,309.2 L189.3,309.5 L191.3,309.7 L193.3,310.0 L195.3,310.3 L197.3,310.6 L199.3,311.0 L201.3,311.3 L203.3,311.7 L205.3,312.1 L207.3,312.6 L209.3,313.0 L211.3,313.5 L213.3,314.0 L215.3,314.6 L217.3,315.1 L219.3,315.7 L221.3,316.4 L223.3,317.0 L225.3,317.7 L227.3,318.5 L229.3,319.3 L231.3,320.1 L233.3,320.9 L235.3,321.8 L237.3,322.7 L239.3,323.6 L241.3,324.6 L243.3,325.6 L245.3,326.7 L247.3,327.8 L249.3,328.9 L251.3,330.0 L253.3,331.2 L255.3,332.4 L257.3,333.6 L259.3,334.9 L261.3,336.1 L263.3,337.4 L265.3,338.7 L267.3,340.0 L269.3,341.3 L271.3,342.6 L273.3,343.9 L275.3,345.2 L277.3,346.5 L279.3,347.8 L281.3,349.1 L283.3,350.3 L285.3,351.6 L287.3,352.8 L289.3,354.0 L291.3,355.2 L293.3,356.3 L295.3,357.4 L297.3,358.5 L299.3,359.6 L301.3,360.6 L303.3,361.6 L305.3,362.5 L307.3,363.4 L309.3,364.3 L311.3,365.1 L313.3,365.9 L315.3,366.7 L317.3,367.5 L319.3,368.2 L321.3,368.8 L323.3,369.5 L325.3,370.1 L327.3,370.6 L329.3,371.2 L331.3,371.7 L333.3,372.2 L335.3,372.6 L337.3,373.1 L339.3,373.5 L341.3,373.9 L343.3,374.2 L345.3,374.6 L347.3,374.9 L349.3,375.2 L351.3,375.5 L353.3,375.7 L355.3,376.0 L357.3,376.2 L359.3,376.4 L361.3,376.6 L363.3,376.8 L365.3,377.0 L367.3,377.2 L369.3,377.4 L371.3,377.5 L373.3,377.6 L375.3,377.8 L377.3,377.9 L379.3,378.0 L381.3,378.1 L383.3,378.2 L385.3,378.3 L387.3,378.4 L389.3,378.5 L391.3,378.5 L393.3,378.6 L395.3,378.7 L397.3,378.7 L399.3,378.8 L401.3,378.9 L403.3,378.9 M270.8,378.9 L272.8,378.9 L274.8,378.8 L276.8,378.7 L278.8,378.7 L280.8,378.6 L282.8,378.5 L284.8,378.5 L286.8,378.4 L288.8,378.3 L290.8,378.2 L292.8,378.1 L294.8,378.0 L296.8,377.9 L298.8,377.8 L300.8,377.6 L302.8,377.5 L304.8,377.4 L306.8,377.2 L308.8,377.0 L310.8,376.8 L312.8,376.6 L314.8,376.4 L316.8,376.2 L318.8,376.0 L320.8,375.7 L322.8,375.5 L324.8,375.2 L326.8,374.9 L328.8,374.6 L330.8,374.2 L332.8,373.9 L334.8,373.5 L336.8,373.1 L338.8,372.6 L340.8,372.2 L342.8,371.7 L344.8,371.2 L346.8,370.6 L348.8,370.1 L350.8,369.5 L352.8,368.8 L354.8,368.2 L356.8,367.5 L358.8,366.7 L360.8,365.9 L362.8,365.1 L364.8,364.3 L366.8,363.4 L368.8,362.5 L370.8,361.6 L372.8,360.6 L374.8,359.6 L376.8,358.5 L378.8,357.4 L380.8,356.3 L382.8,355.2 L384.8,354.0 L386.8,352.8 L388.8,351.6 L390.8,350.3 L392.8,349.1 L394.8,347.8 L396.8,346.5 L398.8,345.2 L400.8,343.9 L402.8,342.6 L404.8,341.3 L406.8,340.0 L408.8,338.7 L410.8,337.4 L412.8,336.1 L414.8,334.9 L416.8,333.6 L418.8,332.4 L420.8,331.2 L422.8,330.0 L424.8,328.9 L426.8,327.8 L428.8,326.7 L430.8,325.6 L432.8,324.6 L434.8,323.6 L436.8,322.7 L438.8,321.8 L440.8,320.9 L442.8,320.1 L444.8,319.3 L446.8,318.5 L448.8,317.7 L450.8,317.0 L452.8,316.4 L454.8,315.7 L456.8,315.1 L458.8,314.6 L460.8,314.0 L462.8,313.5 L464.8,313.0 L466.8,312.6 L468.8,312.1 L470.8,311.7 L472.8,311.3 L474.8,311.0 L476.8,310.6 L478.8,310.3 L480.8,310.0 L482.8,309.7 L484.8,309.5 L486.8,309.2 L488.8,309.0 L490.8,308.8 L492.8,308.6 L494.8,308.4 L496.8,308.2 L498.8,308.0 L500.8,307.8 L502.8,307.7 L504.8,307.6 L506.8,307.4 L508.8,307.3 L510.8,307.2 L512.8,307.1 L514.8,307.0 L516.8,306.9 L518.8,306.8 L520.8,306.7 L522.8,306.7 L524.8,306.6 L526.8,306.5 L528.8,306.5 L530.8,306.4 L532.8,306.3 L534.8,306.3 M270.8,306.3 L272.8,306.3 L274.8,306.4 L276.8,306.5 L278.8,306.5 L280.8,306.6 L282.8,306.7 L284.8,306.7 L286.8,306.8 L288.8,306.9 L290.8,307.0 L292.8,307.1 L294.8,307.2 L296.8,307.3 L298.8,307.4 L300.8,307.6 L302.8,307.7 L304.8,307.8 L306.8,308.0 L308.8,308.2 L310.8,308.4 L312.8,308.6 L314.8,308.8 L316.8,309.0 L318.8,309.2 L320.8,309.5 L322.8,309.7 L324.8,310.0 L326.8,310.3 L328.8,310.6 L330.8,311.0 L332.8,311.3 L334.8,311.7 L336.8,312.1 L338.8,312.6 L340.8,313.0 L342.8,313.5 L344.8,314.0 L346.8,314.6 L348.8,315.1 L350.8,315.7 L352.8,316.4 L354.8,317.0 L356.8,317.7 L358.8,318.5 L360.8,319.3 L362.8,320.1 L364.8,320.9 L366.8,321.8 L368.8,322.7 L370.8,323.6 L372.8,324.6 L374.8,325.6 L376.8,326.7 L378.8,327.8 L380.8,328.9 L382.8,330.0 L384.8,331.2 L386.8,332.4 L388.8,333.6 L390.8,334.9 L392.8,336.1 L394.8,337.4 L396.8,338.7 L398.8,340.0 L400.8,341.3 L402.8,342.6 L404.8,343.9 L406.8,345.2 L408.8,346.5 L410.8,347.8 L412.8,349.1 L414.8,350.3 L416.8,351.6 L418.8,352.8 L420.8,354.0 L422.8,355.2 L424.8,356.3 L426.8,357.4 L428.8,358.5 L430.8,359.6 L432.8,360.6 L434.8,361.6 L436.8,362.5 L438.8,363.4 L440.8,364.3 L442.8,365.1 L444.8,365.9 L446.8,366.7 L448.8,367.5 L450.8,368.2 L452.8,368.8 L454.8,369.5 L456.8,370.1 L458.8,370.6 L460.8,371.2 L462.8,371.7 L464.8,372.2 L466.8,372.6 L468.8,373.1 L470.8,373.5 L472.8,373.9 L474.8,374.2 L476.8,374.6 L478.8,374.9 L480.8,375.2 L482.8,375.5 L484.8,375.7 L486.8,376.0 L488.8,376.2 L490.8,376.4 L492.8,376.6 L494.8,376.8 L496.8,377.0 L498.8,377.2 L500.8,377.4 L502.8,377.5 L504.8,377.6 L506.8,377.8 L508.8,377.9 L510.8,378.0 L512.8,378.1 L514.8,378.2 L516.8,378.3 L518.8,378.4 L520.8,378.5 L522.8,378.5 L524.8,378.6 L526.8,378.7 L528.8,378.7 L530.8,378.8 L532.8,378.9 L534.8,378.9 M402.3,378.9 L404.3,378.9 L406.3,378.8 L408.3,378.7 L410.3,378.7 L412.3,378.6 L414.3,378.5 L416.3,378.5 L418.3,378.4 L420.3,378.3 L422.3,378.2 L424.3,378.1 L426.3,378.0 L428.3,377.9 L430.3,377.8 L432.3,377.6 L434.3,377.5 L436.3,377.4 L438.3,377.2 L440.3,377.0 L442.3,376.8 L444.3,376.6 L446.3,376.4 L448.3,376.2 L450.3,376.0 L452.3,375.7 L454.3,375.5 L456.3,375.2 L458.3,374.9 L460.3,374.6 L462.3,374.2 L464.3,373.9 L466.3,373.5 L468.3,373.1 L470.3,372.6 L472.3,372.2 L474.3,371.7 L476.3,371.2 L478.3,370.6 L480.3,370.1 L482.3,369.5 L484.3,368.8 L486.3,368.2 L488.3,367.5 L490.3,366.7 L492.3,365.9 L494.3,365.1 L496.3,364.3 L498.3,363.4 L500.3,362.5 L502.3,361.6 L504.3,360.6 L506.3,359.6 L508.3,358.5 L510.3,357.4 L512.3,356.3 L514.3,355.2 L516.3,354.0 L518.3,352.8 L520.3,351.6 L522.3,350.3 L524.3,349.1 L526.3,347.8 L528.3,346.5 L530.3,345.2 L532.3,343.9 L534.3,342.6 L536.3,341.3 L538.3,340.0 L540.3,338.7 L542.3,337.4 L544.3,336.1 L546.3,334.9 L548.3,333.6 L550.3,332.4 L552.3,331.2 L554.3,330.0 L556.3,328.9 L558.3,327.8 L560.3,326.7 L562.3,325.6 L564.3,324.6 L566.3,323.6 L568.3,322.7 L570.3,321.8 L572.3,320.9 L574.3,320.1 L576.3,319.3 L578.3,318.5 L580.3,317.7 L582.3,317.0 L584.3,316.4 L586.3,315.7 L588.3,315.1 L590.3,314.6 L592.3,314.0 L594.3,313.5 L596.3,313.0 L598.3,312.6 L600.3,312.1 L602.3,311.7 L604.3,311.3 L606.3,311.0 L608.3,310.6 L610.3,310.3 L612.3,310.0 L614.3,309.7 L616.3,309.5 L618.3,309.2 L620.3,309.0 L622.3,308.8 L624.3,308.6 L626.3,308.4 L628.3,308.2 L630.3,308.0 L632.3,307.8 L634.3,307.7 L636.3,307.6 L638.3,307.4 L640.3,307.3 L642.3,307.2 L644.3,307.1 L646.3,307.0 L648.3,306.9 L650.3,306.8 L652.3,306.7 L654.3,306.7 L656.3,306.6 L658.3,306.5 L660.3,306.5 L662.3,306.4 L664.3,306.3 L666.3,306.3 M402.3,306.3 L404.3,306.3 L406.3,306.4 L408.3,306.5 L410.3,306.5 L412.3,306.6 L414.3,306.7 L416.3,306.7 L418.3,306.8 L420.3,306.9 L422.3,307.0 L424.3,307.1 L426.3,307.2 L428.3,307.3 L430.3,307.4 L432.3,307.6 L434.3,307.7 L436.3,307.8 L438.3,308.0 L440.3,308.2 L442.3,308.4 L444.3,308.6 L446.3,308.8 L448.3,309.0 L450.3,309.2 L452.3,309.5 L454.3,309.7 L456.3,310.0 L458.3,310.3 L460.3,310.6 L462.3,311.0 L464.3,311.3 L466.3,311.7 L468.3,312.1 L470.3,312.6 L472.3,313.0 L474.3,313.5 L476.3,314.0 L478.3,314.6 L480.3,315.1 L482.3,315.7 L484.3,316.4 L486.3,317.0 L488.3,317.7 L490.3,318.5 L492.3,319.3 L494.3,320.1 L496.3,320.9 L498.3,321.8 L500.3,322.7 L502.3,323.6 L504.3,324.6 L506.3,325.6 L508.3,326.7 L510.3,327.8 L512.3,328.9 L514.3,330.0 L516.3,331.2 L518.3,332.4 L520.3,333.6 L522.3,334.9 L524.3,336.1 L526.3,337.4 L528.3,338.7 L530.3,340.0 L532.3,341.3 L534.3,342.6 L536.3,343.9 L538.3,345.2 L540.3,346.5 L542.3,347.8 L544.3,349.1 L546.3,350.3 L548.3,351.6 L550.3,352.8 L552.3,354.0 L554.3,355.2 L556.3,356.3 L558.3,357.4 L560.3,358.5 L562.3,359.6 L564.3,360.6 L566.3,361.6 L568.3,362.5 L570.3,363.4 L572.3,364.3 L574.3,365.1 L576.3,365.9 L578.3,366.7 L580.3,367.5 L582.3,368.2 L584.3,368.8 L586.3,369.5 L588.3,370.1 L590.3,370.6 L592.3,371.2 L594.3,371.7 L596.3,372.2 L598.3,372.6 L600.3,373.1 L602.3,373.5 L604.3,373.9 L606.3,374.2 L608.3,374.6 L610.3,374.9 L612.3,375.2 L614.3,375.5 L616.3,375.7 L618.3,376.0 L620.3,376.2 L622.3,376.4 L624.3,376.6 L626.3,376.8 L628.3,377.0 L630.3,377.2 L632.3,377.4 L634.3,377.5 L636.3,377.6 L638.3,377.8 L640.3,377.9 L642.3,378.0 L644.3,378.1 L646.3,378.2 L648.3,378.3 L650.3,378.4 L652.3,378.5 L654.3,378.5 L656.3,378.6 L658.3,378.7 L660.3,378.7 L662.3,378.8 L664.3,378.9 L666.3,378.9 M533.8,378.9 L535.8,378.9 L537.8,378.8 L539.8,378.7 L541.8,378.7 L543.8,378.6 L545.8,378.5 L547.8,378.5 L549.8,378.4 L551.8,378.3 L553.8,378.2 L555.8,378.1 L557.8,378.0 L559.8,377.9 L561.8,377.8 L563.8,377.6 L565.8,377.5 L567.8,377.4 L569.8,377.2 L571.8,377.0 L573.8,376.8 L575.8,376.6 L577.8,376.4 L579.8,376.2 L581.8,376.0 L583.8,375.7 L585.8,375.5 L587.8,375.2 L589.8,374.9 L591.8,374.6 L593.8,374.2 L595.8,373.9 L597.8,373.5 L599.8,373.1 L601.8,372.6 L603.8,372.2 L605.8,371.7 L607.8,371.2 L609.8,370.6 L611.8,370.1 L613.8,369.5 L615.8,368.8 L617.8,368.2 L619.8,367.5 L621.8,366.7 L623.8,365.9 L625.8,365.1 L627.8,364.3 L629.8,363.4 L631.8,362.5 L633.8,361.6 L635.8,360.6 L637.8,359.6 L639.8,358.5 L641.8,357.4 L643.8,356.3 L645.8,355.2 L647.8,354.0 L649.8,352.8 L651.8,351.6 L653.8,350.3 L655.8,349.1 L657.8,347.8 L659.8,346.5 L661.8,345.2 L663.8,343.9 L665.8,342.6 L667.8,341.3 L669.8,340.0 L671.8,338.7 L673.8,337.4 L675.8,336.1 L677.8,334.9 L679.8,333.6 L681.8,332.4 L683.8,331.2 L685.8,330.0 L687.8,328.9 L689.8,327.8 L691.8,326.7 L693.8,325.6 L695.8,324.6 L697.8,323.6 L699.8,322.7 L701.8,321.8 L703.8,320.9 L705.8,320.1 L707.8,319.3 L709.8,318.5 L711.8,317.7 L713.8,317.0 L715.8,316.4 L717.8,315.7 L719.8,315.1 L721.8,314.6 L723.8,314.0 L725.8,313.5 L727.8,313.0 L729.8,312.6 L731.8,312.1 L733.8,311.7 L735.8,311.3 L737.8,311.0 L739.8,310.6 L741.8,310.3 L743.8,310.0 L745.8,309.7 L747.8,309.5 L749.8,309.2 L751.8,309.0 L753.8,308.8 L755.8,308.6 L757.8,308.4 L759.8,308.2 L761.8,308.0 L763.8,307.8 L765.8,307.7 L767.8,307.6 L769.8,307.4 L771.8,307.3 L773.8,307.2 L775.8,307.1 L777.8,307.0 L779.8,306.9 L781.8,306.8 L783.8,306.7 L785.8,306.7 L787.8,306.6 L789.8,306.5 L791.8,306.5 L793.8,306.4 L795.8,306.3 L797.8,306.3 M533.8,306.3 L535.8,306.3 L537.8,306.4 L539.8,306.5 L541.8,306.5 L543.8,306.6 L545.8,306.7 L547.8,306.7 L549.8,306.8 L551.8,306.9 L553.8,307.0 L555.8,307.1 L557.8,307.2 L559.8,307.3 L561.8,307.4 L563.8,307.6 L565.8,307.7 L567.8,307.8 L569.8,308.0 L571.8,308.2 L573.8,308.4 L575.8,308.6 L577.8,308.8 L579.8,309.0 L581.8,309.2 L583.8,309.5 L585.8,309.7 L587.8,310.0 L589.8,310.3 L591.8,310.6 L593.8,311.0 L595.8,311.3 L597.8,311.7 L599.8,312.1 L601.8,312.6 L603.8,313.0 L605.8,313.5 L607.8,314.0 L609.8,314.6 L611.8,315.1 L613.8,315.7 L615.8,316.4 L617.8,317.0 L619.8,317.7 L621.8,318.5 L623.8,319.3 L625.8,320.1 L627.8,320.9 L629.8,321.8 L631.8,322.7 L633.8,323.6 L635.8,324.6 L637.8,325.6 L639.8,326.7 L641.8,327.8 L643.8,328.9 L645.8,330.0 L647.8,331.2 L649.8,332.4 L651.8,333.6 L653.8,334.9 L655.8,336.1 L657.8,337.4 L659.8,338.7 L661.8,340.0 L663.8,341.3 L665.8,342.6 L667.8,343.9 L669.8,345.2 L671.8,346.5 L673.8,347.8 L675.8,349.1 L677.8,350.3 L679.8,351.6 L681.8,352.8 L683.8,354.0 L685.8,355.2 L687.8,356.3 L689.8,357.4 L691.8,358.5 L693.8,359.6 L695.8,360.6 L697.8,361.6 L699.8,362.5 L701.8,363.4 L703.8,364.3 L705.8,365.1 L707.8,365.9 L709.8,366.7 L711.8,367.5 L713.8,368.2 L715.8,368.8 L717.8,369.5 L719.8,370.1 L721.8,370.6 L723.8,371.2 L725.8,371.7 L727.8,372.2 L729.8,372.6 L731.8,373.1 L733.8,373.5 L735.8,373.9 L737.8,374.2 L739.8,374.6 L741.8,374.9 L743.8,375.2 L745.8,375.5 L747.8,375.7 L749.8,376.0 L751.8,376.2 L753.8,376.4 L755.8,376.6 L757.8,376.8 L759.8,377.0 L761.8,377.2 L763.8,377.4 L765.8,377.5 L767.8,377.6 L769.8,377.8 L771.8,377.9 L773.8,378.0 L775.8,378.1 L777.8,378.2 L779.8,378.3 L781.8,378.4 L783.8,378.5 L785.8,378.5 L787.8,378.6 L789.8,378.7 L791.8,378.7 L793.8,378.8 L795.8,378.9 L797.8,378.9 M359.6,306.3 L577.6,306.3 M359.6,378.9 L577.6,378.9" fill="none" stroke="#2c52c8" stroke-width="2.6" opacity=".6"/></g><rect x="359.6" y="276" width="218.0" height="133.2" fill="none" stroke="#b8b8b8" stroke-width="1.5"/><path d="M360.40000000000003,276.8 l7,0 l-7,7 Z" fill="#aaa"/><rect x="467.4" y="302" width="2.4" height="19" fill="#f0f4ff"/><rect x="467.4" y="364.7" width="2.4" height="18" fill="#f0f4ff"/><path d="M508.8,341.5 L519,341.5" stroke="#fff" stroke-width="1.2"/><path d="M517.5,338.6 L523.5,341.5 L517.5,344.4 Z" fill="#fff"/><path d="M525,342 L543.5,342" stroke="#f0f4ff" stroke-width="2.2"/><path d="M552,338.5 L544.5,342 L552,345.5 Z" fill="#fff"/><path d="M587.2,338.5 L580,342.5 L587.2,346.5 Z" fill="#2a50f0"/></svg>
<div class="a" style="left:455.8px;top:334px;width:53.0px;height:10.399999999999977px;border:1.2px solid #d8d8d8;border-radius:2px;background:#050505;"></div>
<div class="t" style="left:458.20px;top:334.84px;font-size:8px;line-height:8.94px;color:#fafafa;transform:scaleX(1.0155);">TJ Histogram</div>
<div class="t" style="left:589.50px;top:337.77px;font-size:9.6px;line-height:10.72px;color:#2a48e0;-webkit-text-stroke:0.3px #2a48e0;">D1</div>
<div class="t" style="left:367.00px;top:277.23px;font-size:6px;line-height:6.70px;color:#6a6a6a;transform:scaleX(1.0269);">768.1048 bits</div>
<div class="a" style="left:16px;top:422px;width:586px;height:32px;background:#0e0e0e;"></div>
<div class="a" style="left:19px;top:422.4px;width:14.5px;height:16.600000000000023px;border:1px solid #4a4a4a;border-radius:3px;background:#161616;"></div>
<div class="a" style="left:19px;top:440px;width:14.5px;height:16px;border:1px solid #4a4a4a;border-radius:3px;background:#161616;"></div>
<svg width="628" height="565"><path d="M30,426 L22.5,430.7 L30,435.4 Z" fill="none" stroke="#444" stroke-width="1"/><path d="M22,444 h2 M26,444 h2 M30,444 h2 M22,448 h2 M26,448 h2 M30,448 h2" stroke="#3a3a3a" stroke-width="1.5"/></svg>
<div class="a" style="left:35px;top:422.4px;width:127px;height:37.60000000000002px;border:1px solid #555;border-radius:5px 5px 0 0;background:linear-gradient(#1c1c1c,#121212);"></div>
<svg width="628" height="565"><defs><radialGradient id="bd" cx="45%" cy="35%" r="65%"><stop offset="0" stop-color="#6a7aff"/><stop offset=".6" stop-color="#2030e8"/><stop offset="1" stop-color="#0a10a0"/></radialGradient></defs><circle cx="75.8" cy="448.2" r="7.2" fill="url(#bd)"/></svg>
<div class="t" style="left:71.30px;top:446.05px;font-size:4.5px;line-height:5.03px;color:#c8d0ff;font-weight:bold;">D1A</div>
<div class="t" style="left:84.80px;top:440.15px;font-size:7.8px;line-height:8.71px;color:#f0f0f0;transform:scaleX(0.7642);-webkit-text-stroke:0.2px #f0f0f0;">156 mV/</div>
<div class="t" style="left:84.80px;top:448.55px;font-size:7.8px;line-height:8.71px;color:#f0f0f0;transform:scaleX(0.7763);-webkit-text-stroke:0.2px #f0f0f0;">-1.1 mV</div>
<div class="a" style="left:161.5px;top:422px;width:62.5px;height:38px;border:1px solid #555;border-radius:5px 5px 0 0;background:linear-gradient(#1e1e1e,#141414);"></div>
<div class="t" style="left:166.50px;top:428.47px;font-size:7.4px;line-height:8.27px;color:#e8e8e8;font-weight:bold;font-style:italic;">CDR...</div>
<svg width="628" height="565"><path d="M212.3,432 v-2 a2.2,2.2 0 0 1 4.4,0 v2" fill="none" stroke="#30d030" stroke-width="1.3"/><rect x="211" y="431.8" width="7" height="5" fill="#30d030"/></svg>
<div class="t" style="left:166.50px;top:438.17px;font-size:7.4px;line-height:8.27px;color:#f0f0f0;transform:scaleX(0.8450);">32.000000 Gb/s</div>
<div class="t" style="left:166.50px;top:446.48px;font-size:7.2px;line-height:8.04px;color:#d0d0d0;font-weight:bold;">LBW:</div>
<div class="t" style="left:185.00px;top:446.48px;font-size:7.2px;line-height:8.04px;color:#666;">19.20 MHz</div>
<div class="a" style="left:223.5px;top:422px;width:64.0px;height:38px;border:1px solid #555;border-radius:5px 5px 0 0;background:linear-gradient(#1e1e1e,#141414);"></div>
<div class="t" style="left:228.80px;top:428.47px;font-size:7.4px;line-height:8.27px;color:#e8e8e8;font-weight:bold;font-style:italic;">PTB...</div>
<svg width="628" height="565"><defs><radialGradient id="gd" cx="40%" cy="35%" r="65%"><stop offset="0" stop-color="#9aff9a"/><stop offset=".6" stop-color="#20c020"/><stop offset="1" stop-color="#0a700a"/></radialGradient></defs><circle cx="277" cy="432.5" r="4.2" fill="url(#gd)"/><path d="M286.5,450 L282,455 L286.5,455 Z" fill="#666"/></svg>
<div class="t" style="left:228.80px;top:439.08px;font-size:7.2px;line-height:8.04px;color:#e8e8e8;transform:scaleX(0.8291);">Reference:</div>
<div class="t" style="left:228.80px;top:447.88px;font-size:7.2px;line-height:8.04px;color:#e8e8e8;transform:scaleX(0.8308);">Internal Reference...</div>
<div class="a" style="left:288.3px;top:422.4px;width:14.0px;height:16.600000000000023px;border:1px solid #4a4a4a;border-radius:3px;background:#161616;"></div>
<div class="a" style="left:288.3px;top:440px;width:14.0px;height:18px;border:1px solid #4a4a4a;border-radius:3px;background:#161616;"></div>
<svg width="628" height="565"><path d="M292,426.5 L299,430.7 L292,435 Z" fill="none" stroke="#555" stroke-width="1"/><circle cx="295.3" cy="449" r="3.8" fill="none" stroke="#ddd" stroke-width="2.2"/><path d="M295.3,443.5 v2 M295.3,452.5 v2 M289.8,449 h2 M298.8,449 h2 M291.4,445.1 l1.4,1.4 M297.8,451.5 l1.4,1.4 M291.4,452.9 l1.4,-1.4 M297.8,446.5 l1.4,-1.4" stroke="#ddd" stroke-width="1.6"/></svg>
<div class="a" style="left:315.3px;top:422.2px;width:60.39999999999998px;height:37.80000000000001px;border:1px solid #555;border-radius:5px 5px 0 0;background:linear-gradient(#1e1e1e,#141414);"></div>
<div class="t" style="left:331.50px;top:424.35px;font-size:7.8px;line-height:8.71px;color:#f0f0f0;font-weight:bold;font-style:italic;transform:scaleX(0.8314);">Timebase</div>
<div class="t" style="left:330.30px;top:434.26px;font-size:7.6px;line-height:8.49px;color:#6a6a6a;transform:scaleX(0.8982);">1.6672 bits</div>
<div class="t" style="left:319.60px;top:443.06px;font-size:7.6px;line-height:8.49px;color:#e8e8e8;transform:scaleX(0.8811);">Pos:</div>
<div class="t" style="left:334.50px;top:443.06px;font-size:7.6px;line-height:8.49px;color:#6a6a6a;transform:scaleX(0.8239);">768.1048 bits</div>
<div class="a" style="left:378px;top:422.2px;width:65.69999999999999px;height:37.80000000000001px;border:1px solid #555;border-radius:5px 5px 0 0;background:linear-gradient(#1e1e1e,#141414);"></div>
<div class="t" style="left:393.60px;top:424.35px;font-size:7.8px;line-height:8.71px;color:#f0f0f0;font-weight:bold;font-style:italic;transform:scaleX(0.8430);">Acquisition</div>
<div class="t" style="left:394.80px;top:433.95px;font-size:7.8px;line-height:8.71px;color:#f0f0f0;transform:scaleX(0.9590);-webkit-text-stroke:0.25px #f0f0f0;">Jitter Mode</div>
<div class="t" style="left:394.80px;top:442.05px;font-size:7.8px;line-height:8.71px;color:#f0f0f0;transform:scaleX(0.8218);-webkit-text-stroke:0.25px #f0f0f0;">Acquisition</div>
<div class="a" style="left:446.8px;top:422.2px;width:56.80000000000001px;height:37.80000000000001px;border:1px solid #555;border-radius:5px 5px 0 0;background:linear-gradient(#1e1e1e,#141414);"></div>
<div class="t" style="left:462.18px;top:424.36px;font-size:7.6px;line-height:8.49px;color:#f0f0f0;font-weight:bold;font-style:italic;">Trigger</div>
<div class="t" style="left:450.50px;top:433.28px;font-size:7.2px;line-height:8.04px;color:#f0f0f0;transform:scaleX(0.8902);">Src: CDR (Slot 1)</div>
<div class="t" style="left:453.00px;top:442.08px;font-size:7.2px;line-height:8.04px;color:#f0f0f0;transform:scaleX(0.8684);">32.000555 Gb/s</div>
<div class="t" style="left:460.59px;top:450.08px;font-size:7.2px;line-height:8.04px;color:#f0f0f0;">2047 bits</div>
<div class="a" style="left:506.3px;top:422.2px;width:31.19999999999999px;height:37.80000000000001px;border:1px solid #3a3a3a;border-radius:5px 5px 0 0;background:#121212;"></div>
<div class="t" style="left:510.62px;top:424.69px;font-size:7px;line-height:7.82px;color:#5a5a5a;">Pattern</div>
<svg width="628" height="565"><path d="M518.8,440.5 v-2.5 a3.6,3.6 0 0 1 7.2,0 v2.5" fill="none" stroke="#8a9a8a" stroke-width="1.5"/><rect x="517" y="440.2" width="10.8" height="8.3" fill="#2e8a2e"/><path d="M517,441.8 h10.8 M517,444.6 h10.8 M517,447.4 h10.8" stroke="#a8dca8" stroke-width="1.1"/></svg>
<div class="t" style="left:514.51px;top:449.69px;font-size:7px;line-height:7.82px;color:#4a4a4a;">Lock</div>
<svg width="628" height="565"><circle cx="556.4" cy="441" r="14.5" fill="#0c0c0c" stroke="#9a9a9a" stroke-width="1.3"/><path d="M550.5,432 L556.4,427 L562.3,432 Z" fill="#e8e8e8"/><circle cx="592" cy="441" r="14.5" fill="#0c0c0c" stroke="#9a9a9a" stroke-width="1.3"/><path d="M586,432 L592,427 L598,432 Z" fill="#e8e8e8"/></svg>
<div class="t" style="left:547.30px;top:436.25px;font-size:7.8px;line-height:8.71px;color:#f0f0f0;font-weight:bold;font-style:italic;">Math</div>
<div class="t" style="left:581.50px;top:436.25px;font-size:7.8px;line-height:8.71px;color:#f0f0f0;font-weight:bold;font-style:italic;">Signal</div>
<svg width="628" height="565" style="left:0;top:0"><defs><linearGradient id="pg" x1="0" y1="0" x2="0" y2="1"><stop offset="0" stop-color="#e0c4ec"/><stop offset="0.26" stop-color="#b488cc"/><stop offset="0.32" stop-color="#6a2080"/><stop offset="0.44" stop-color="#4c0464"/><stop offset="0.58" stop-color="#700890"/><stop offset="0.82" stop-color="#d020ea"/><stop offset="1" stop-color="#c018dc"/></linearGradient><radialGradient id="ph" cx="50%" cy="90%" r="50%"><stop offset="0" stop-color="#ffc0ff" stop-opacity=".85"/><stop offset="1" stop-color="#ff60ff" stop-opacity="0"/></radialGradient></defs><ellipse cx="50.7" cy="31.2" rx="31.3" ry="17.2" fill="#24002c"/><ellipse cx="50.7" cy="31.4" rx="30" ry="16.3" fill="url(#pg)"/><ellipse cx="50.7" cy="44.5" rx="14" ry="3.2" fill="url(#ph)"/><path d="M45.5,39.2 L55.9,39.2 M47.5,40.2 L50.7,43.2 L53.9,40.2" fill="none" stroke="#6a1080" stroke-width="1.1" opacity=".8"/></svg>
<div class="t" style="left:27.30px;top:25.08px;font-size:9.4px;line-height:10.50px;color:#000;font-weight:bold;transform:scaleX(0.9473);opacity:.5;">Jitter/Noise</div>
<div class="t" style="left:27.00px;top:24.58px;font-size:9.4px;line-height:10.50px;color:#fff;font-weight:bold;transform:scaleX(0.9434);">Jitter/Noise</div>
</div>
<div class="t" style="left:16.05px;top:467.32px;font-size:31.8px;line-height:35.52px;color:#666666;transform:scaleX(0.9231);-webkit-text-stroke:0.9px #fff;">Figure</div>
<div class="t" style="left:106.68px;top:467.32px;font-size:31.8px;line-height:35.52px;color:#666666;transform:scaleX(0.9673);-webkit-text-stroke:0.9px #fff;">4.</div>
<div class="t" style="left:140.02px;top:467.32px;font-size:31.8px;line-height:35.52px;color:#666666;transform:scaleX(0.9664);-webkit-text-stroke:0.9px #fff;">32</div>
<div class="t" style="left:181.38px;top:467.32px;font-size:31.8px;line-height:35.52px;color:#666666;transform:scaleX(0.9566);-webkit-text-stroke:0.9px #fff;">Gb/s</div>
<div class="t" style="left:252.91px;top:467.32px;font-size:31.8px;line-height:35.52px;color:#666666;transform:scaleX(0.8616);-webkit-text-stroke:0.9px #fff;">PRBS</div>
<div class="t" style="left:334.93px;top:467.32px;font-size:31.8px;line-height:35.52px;color:#666666;transform:scaleX(0.9230);-webkit-text-stroke:0.9px #fff;">211-1</div>
<div class="t" style="left:416.85px;top:467.32px;font-size:31.8px;line-height:35.52px;color:#666666;transform:scaleX(0.9412);-webkit-text-stroke:0.9px #fff;">showing</div>
<div class="t" style="left:16.28px;top:504.92px;font-size:31.8px;line-height:35.52px;color:#666666;transform:scaleX(0.8906);-webkit-text-stroke:0.9px #fff;">138</div>
<div class="t" style="left:71.86px;top:504.92px;font-size:31.8px;line-height:35.52px;color:#666666;transform:scaleX(0.9262);-webkit-text-stroke:0.9px #fff;">fs</div>
<div class="t" style="left:103.79px;top:504.92px;font-size:31.8px;line-height:35.52px;color:#666666;transform:scaleX(0.9065);-webkit-text-stroke:0.9px #fff;">RJ</div>
<div class="t" style="left:138.33px;top:523.16px;font-size:20.6px;line-height:23.01px;color:#666666;transform:scaleX(1.0205);-webkit-text-stroke:0.35px #fff;">rms</div>
<div class="t" style="left:174.48px;top:504.92px;font-size:31.8px;line-height:35.52px;color:#666666;transform:scaleX(0.8805);-webkit-text-stroke:0.9px #fff;">.</div></body></html>
